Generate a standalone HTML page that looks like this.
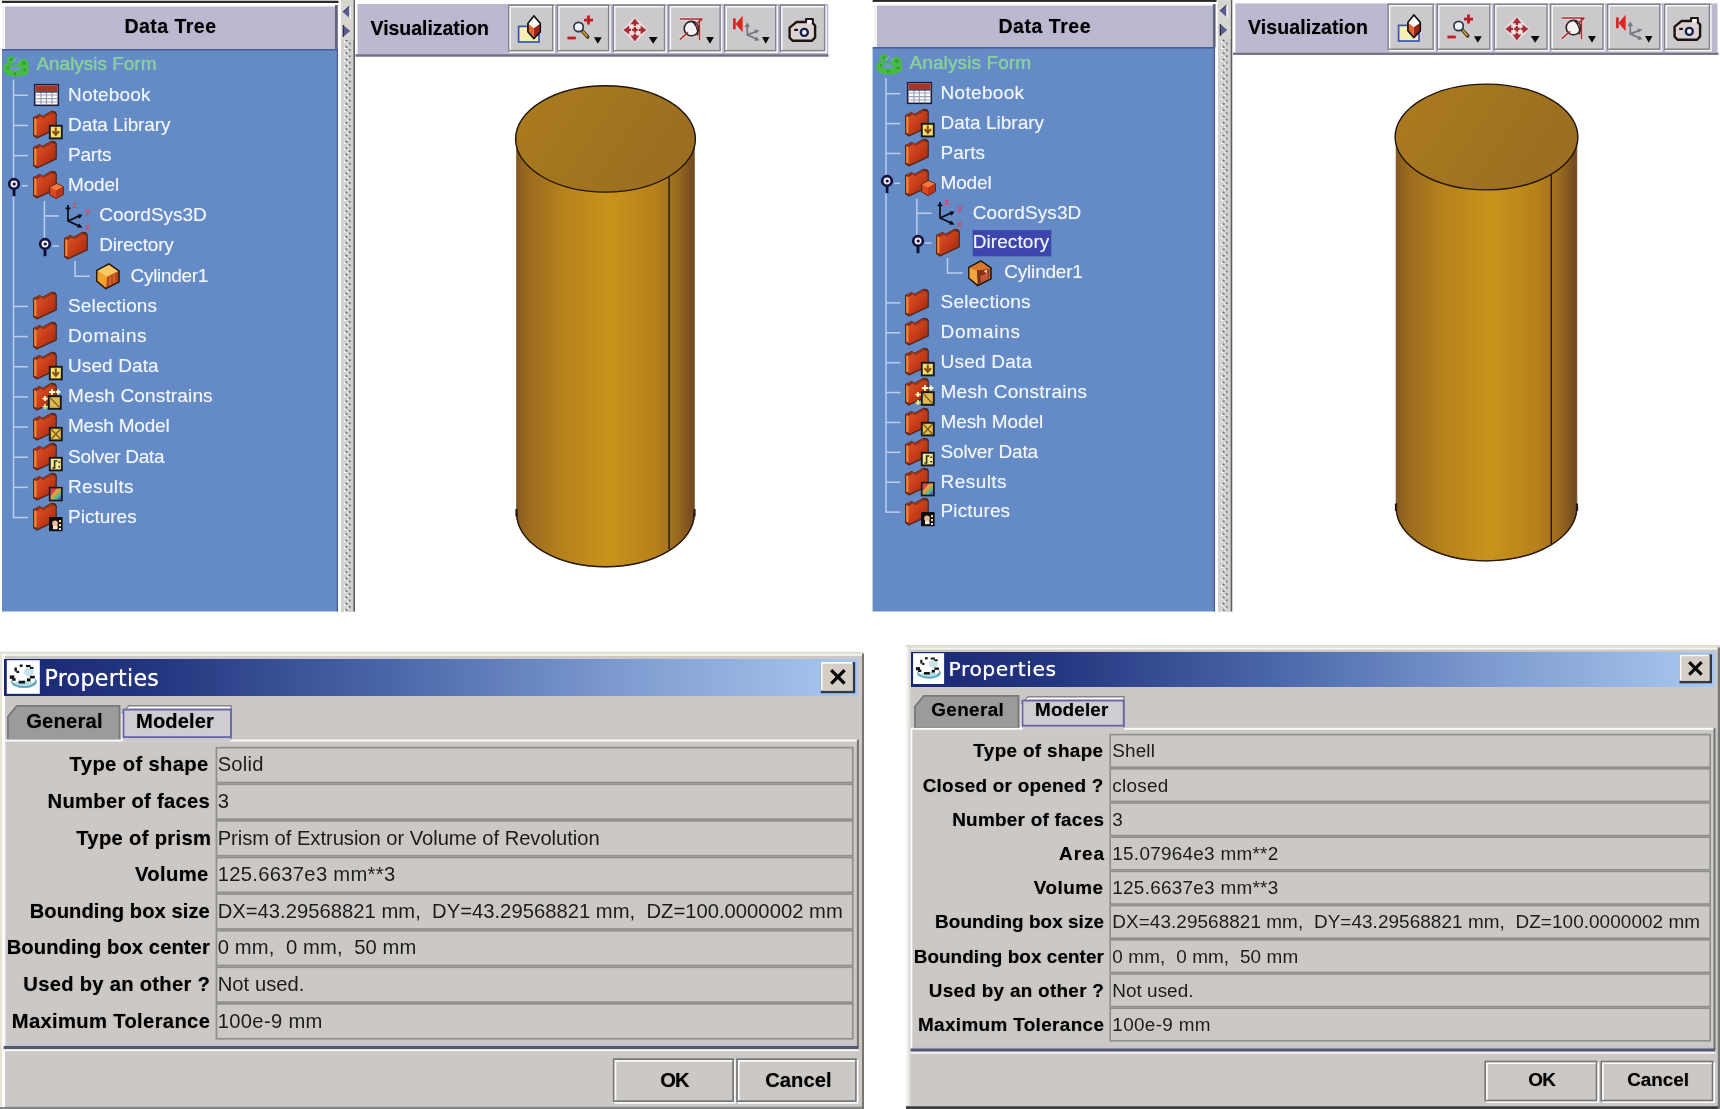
<!DOCTYPE html>
<html><head><meta charset="utf-8"><title>Properties</title>
<style>
html,body{margin:0;padding:0;background:#fff;}
body{width:1720px;height:1109px;position:relative;overflow:hidden;font-family:"Liberation Sans",sans-serif;}
.t{position:absolute;white-space:pre;line-height:1;color:#000;}
.tw{color:#f2f5fb;text-shadow:0 0 1px rgba(230,238,250,.55);}
.k{text-shadow:0 0 1px rgba(0,0,0,.45);}
svg{overflow:visible}
#stage{position:absolute;left:0;top:0;width:1720px;height:1109px;overflow:hidden;filter:blur(0.5px);}
</style></head><body><div id="stage">
<svg style="position:absolute;left:2px;top:0px" width="337" height="3"><g transform="translate(0.00 0.70)"><rect width="336.50" height="2.30" fill="#2a2a2a"/></g></svg>
<svg style="position:absolute;left:2px;top:50px" width="336" height="562"><g transform="translate(0.00 0.00)"><rect width="336.00" height="561.50" fill="#648bc6"/></g></svg>
<svg style="position:absolute;left:336px;top:50px" width="3" height="562"><g transform="translate(0.60 0.00)"><rect width="1.50" height="561.50" fill="#52638e"/></g></svg>
<svg style="position:absolute;left:5px;top:6px" width="330" height="43"><g transform="translate(0.00 0.50)"><rect width="330.00" height="42.50" fill="#bbb8d0"/></g></svg>
<svg style="position:absolute;left:335px;top:5px" width="3" height="45"><g transform="translate(0.00 0.00)"><rect width="2.80" height="44.50" fill="#63647f"/></g></svg>
<svg style="position:absolute;left:2px;top:6px" width="3" height="43"><g transform="translate(0.40 0.10)"><rect width="2.60" height="42.90" fill="#f4f4f8"/></g></svg>
<span class="t k" style="left:124.50px;top:16.89px;font-size:19.50px;letter-spacing:0.463px;font-weight:bold;">Data Tree</span>
<svg style="position:absolute;left:2px;top:49px" width="336" height="2"><g transform="translate(0.00 0.00)"><rect width="336.00" height="1.60" fill="#4a5f98"/></g></svg>
<div class="" style="position:absolute;left:341.00px;top:0.00px;width:12.60px;height:611.50px;background-color:#d2d1cd;background-image:radial-gradient(circle at 5.4px 1.6px,#74747e 0,#84848e 0.9px,rgba(255,255,255,0) 1.5px),radial-gradient(circle at 4.4px 2.4px,#fff 0,#fff 1px,rgba(255,255,255,0) 1.7px),radial-gradient(circle at 8.6px 4.8px,#74747e 0,#84848e 0.9px,rgba(255,255,255,0) 1.5px),radial-gradient(circle at 7.6px 5.6px,#fff 0,#fff 1px,rgba(255,255,255,0) 1.7px);background-size:14.00px 6.34px;background-position:0 39px"></div>
<svg style="position:absolute;left:353px;top:0px" width="2" height="612"><g transform="translate(0.40 0.00)"><rect width="1.60" height="611.50" fill="#5c5c5c"/></g></svg>
<svg style="position:absolute;left:341px;top:0px" width="13" height="40"><g transform="translate(0.00 0.00)"><rect width="12.40" height="40.00" fill="#d6d5d0"/></g></svg>
<svg style="position:absolute;left:341.00px;top:0.00px" width="14.00" height="38.00" viewBox="0 0 14.00 38"><polygon points="1.9,11.9 8.5,6 8.5,18" fill="#5c5a92"/><polygon points="2.1,24.9 2.1,37 9.3,31" fill="#5c5a92"/><path d="M9.1,6 V18.4" stroke="#fff" stroke-width="1.3"/><path d="M2.3,24.9 V37" stroke="#20203c" stroke-width="1.1"/><path d="M1.9,11.9 L8.5,6" stroke="#20203c" stroke-width="0.9"/></svg>
<svg style="position:absolute;left:357px;top:4px" width="472" height="51"><g transform="translate(0.50 0.00)"><rect width="470.80" height="50.20" fill="#bbb8d0"/></g></svg>
<span class="t k" style="left:370.50px;top:18.89px;font-size:19.50px;letter-spacing:-0.028px;font-weight:bold;">Visualization</span>
<svg style="position:absolute;left:355px;top:54px" width="474" height="3"><g transform="translate(0.50 0.20)"><rect width="473.00" height="2.50" fill="#6e6e84"/></g></svg>
<svg style="position:absolute;left:12px;top:79px" width="3" height="440"><g transform="translate(0.75 0.50)"><rect width="1.50" height="438.79" fill="#bccef0"/></g></svg>
<svg style="position:absolute;left:13px;top:94px" width="15" height="3"><g transform="translate(0.50 0.55)"><rect width="14.40" height="1.50" fill="#bccef0"/></g></svg>
<svg style="position:absolute;left:13px;top:124px" width="15" height="3"><g transform="translate(0.50 0.71)"><rect width="14.40" height="1.50" fill="#bccef0"/></g></svg>
<svg style="position:absolute;left:13px;top:154px" width="15" height="3"><g transform="translate(0.50 0.87)"><rect width="14.40" height="1.50" fill="#bccef0"/></g></svg>
<svg style="position:absolute;left:21px;top:185px" width="7" height="2"><g transform="translate(0.80 0.03)"><rect width="5.80" height="1.50" fill="#bccef0"/></g></svg>
<svg style="position:absolute;left:13px;top:305px" width="15" height="3"><g transform="translate(0.50 0.67)"><rect width="14.40" height="1.50" fill="#bccef0"/></g></svg>
<svg style="position:absolute;left:13px;top:335px" width="15" height="3"><g transform="translate(0.50 0.83)"><rect width="14.40" height="1.50" fill="#bccef0"/></g></svg>
<svg style="position:absolute;left:13px;top:365px" width="15" height="3"><g transform="translate(0.50 0.99)"><rect width="14.40" height="1.50" fill="#bccef0"/></g></svg>
<svg style="position:absolute;left:13px;top:396px" width="15" height="2"><g transform="translate(0.50 0.15)"><rect width="14.40" height="1.50" fill="#bccef0"/></g></svg>
<svg style="position:absolute;left:13px;top:426px" width="15" height="2"><g transform="translate(0.50 0.31)"><rect width="14.40" height="1.50" fill="#bccef0"/></g></svg>
<svg style="position:absolute;left:13px;top:456px" width="15" height="2"><g transform="translate(0.50 0.47)"><rect width="14.40" height="1.50" fill="#bccef0"/></g></svg>
<svg style="position:absolute;left:13px;top:486px" width="15" height="3"><g transform="translate(0.50 0.63)"><rect width="14.40" height="1.50" fill="#bccef0"/></g></svg>
<svg style="position:absolute;left:13px;top:516px" width="15" height="3"><g transform="translate(0.50 0.79)"><rect width="14.40" height="1.50" fill="#bccef0"/></g></svg>
<svg style="position:absolute;left:43px;top:200px" width="3" height="38"><g transform="translate(0.65 0.98)"><rect width="1.50" height="36.82" fill="#bccef0"/></g></svg>
<svg style="position:absolute;left:44px;top:215px" width="15" height="2"><g transform="translate(0.40 0.19)"><rect width="14.60" height="1.50" fill="#bccef0"/></g></svg>
<svg style="position:absolute;left:52px;top:245px" width="7" height="2"><g transform="translate(0.20 0.35)"><rect width="6.80" height="1.50" fill="#bccef0"/></g></svg>
<svg style="position:absolute;left:74px;top:260px" width="2" height="18"><g transform="translate(0.25 0.90)"><rect width="1.50" height="16.11" fill="#bccef0"/></g></svg>
<svg style="position:absolute;left:75px;top:275px" width="15" height="3"><g transform="translate(0.00 0.51)"><rect width="15.00" height="1.50" fill="#bccef0"/></g></svg>
<svg style="position:absolute;left:3.20px;top:54.54px" width="28.00" height="22.40" viewBox="0 0 28 22.4"><g fill="#46bc42"><ellipse cx="13.4" cy="15.6" rx="13" ry="6"/><circle cx="8" cy="5" r="3.8"/><ellipse cx="20.4" cy="9.4" rx="5.4" ry="5.6"/><ellipse cx="4.6" cy="12" rx="4.2" ry="3.2"/></g><ellipse cx="12" cy="13.4" rx="6" ry="2.2" fill="#6c98c8"/><path d="M10,7 L14,2.6 M15,8 L17,4" stroke="#78aad0" stroke-width="1.4"/><g fill="#34a034"><circle cx="8" cy="4.6" r="1.6"/><circle cx="21" cy="8" r="2"/><circle cx="5" cy="12.4" r="1.4"/><circle cx="22" cy="15" r="1.6"/><circle cx="12" cy="18.6" r="1.6"/></g></svg>
<span class="t tw" style="left:36.40px;top:54.46px;font-size:19.00px;letter-spacing:-0.021px;color:#84d48e;">Analysis Form</span>
<svg style="position:absolute;left:34.30px;top:83.70px" width="25.00" height="22.00" viewBox="0 0 25 22"><rect x="0.7" y="0.7" width="23.6" height="20.6" fill="#fff" stroke="#1c1c3c" stroke-width="1.6"/><rect x="1.5" y="1.5" width="22" height="5.6" fill="#a83424"/><path d="M1.5,11 H23.5 M1.5,14.6 H23.5 M1.5,18 H23.5 M7,8 V21 M12.4,8 V21 M18,8 V21" stroke="#9aa0b4" stroke-width="1.2" fill="none"/><rect x="1.5" y="7.1" width="22" height="1.6" fill="#40405a"/></svg>
<span class="t tw" style="left:68.00px;top:84.62px;font-size:19.00px;letter-spacing:0.181px;">Notebook</span>
<svg style="position:absolute;left:32.60px;top:111.16px" width="24.00" height="27.00" viewBox="0 0 24 27"><defs><linearGradient id="fg" x1="0" y1="0" x2="1" y2="1"><stop offset="0" stop-color="#de5426"/><stop offset="0.5" stop-color="#c63c18"/><stop offset="1" stop-color="#982810"/></linearGradient></defs><polygon points="0.5,6.6 6.6,3.4 9.4,5.4 18.6,0.3 22,0.9 23.3,2.7 23.3,17.9 4,27 0.6,24.8" fill="#7a2a14" stroke="#54281c" stroke-width="1.1" stroke-linejoin="round"/><polygon points="3.6,8 7.6,5.6 10,7.2 19,2.2 22.4,3.2 22.4,17.2 4.8,25.4 3.6,24.6" fill="url(#fg)"/><polygon points="1.2,7 3.6,8 3.6,24.6 1.2,23.8" fill="#f48838"/><path d="M1.6,6.8 L6.6,4.2 L9.4,6.2 L18.6,1.2" fill="none" stroke="#c23a1a" stroke-width="1"/></svg>
<svg style="position:absolute;left:48.60px;top:125.06px" width="13.60" height="14.20" viewBox="0 0 13.6 14.2"><rect x="0.8" y="0.8" width="12" height="12.6" fill="#f4e070" stroke="#18181a" stroke-width="1.9"/><path d="M6.8,2.6 V8.6 M3.6,6.2 L6.8,10 L10,6.2" stroke="#8a4a10" stroke-width="2" fill="none"/></svg>
<span class="t tw" style="left:68.00px;top:114.78px;font-size:19.00px;letter-spacing:-0.081px;">Data Library</span>
<svg style="position:absolute;left:32.60px;top:141.32px" width="24.00" height="27.00" viewBox="0 0 24 27"><defs><linearGradient id="fg" x1="0" y1="0" x2="1" y2="1"><stop offset="0" stop-color="#de5426"/><stop offset="0.5" stop-color="#c63c18"/><stop offset="1" stop-color="#982810"/></linearGradient></defs><polygon points="0.5,6.6 6.6,3.4 9.4,5.4 18.6,0.3 22,0.9 23.3,2.7 23.3,17.9 4,27 0.6,24.8" fill="#7a2a14" stroke="#54281c" stroke-width="1.1" stroke-linejoin="round"/><polygon points="3.6,8 7.6,5.6 10,7.2 19,2.2 22.4,3.2 22.4,17.2 4.8,25.4 3.6,24.6" fill="url(#fg)"/><polygon points="1.2,7 3.6,8 3.6,24.6 1.2,23.8" fill="#f48838"/><path d="M1.6,6.8 L6.6,4.2 L9.4,6.2 L18.6,1.2" fill="none" stroke="#c23a1a" stroke-width="1"/></svg>
<span class="t tw" style="left:68.00px;top:144.94px;font-size:19.00px;letter-spacing:-0.187px;">Parts</span>
<svg style="position:absolute;left:32.60px;top:171.48px" width="24.00" height="27.00" viewBox="0 0 24 27"><defs><linearGradient id="fg" x1="0" y1="0" x2="1" y2="1"><stop offset="0" stop-color="#de5426"/><stop offset="0.5" stop-color="#c63c18"/><stop offset="1" stop-color="#982810"/></linearGradient></defs><polygon points="0.5,6.6 6.6,3.4 9.4,5.4 18.6,0.3 22,0.9 23.3,2.7 23.3,17.9 4,27 0.6,24.8" fill="#7a2a14" stroke="#54281c" stroke-width="1.1" stroke-linejoin="round"/><polygon points="3.6,8 7.6,5.6 10,7.2 19,2.2 22.4,3.2 22.4,17.2 4.8,25.4 3.6,24.6" fill="url(#fg)"/><polygon points="1.2,7 3.6,8 3.6,24.6 1.2,23.8" fill="#f48838"/><path d="M1.6,6.8 L6.6,4.2 L9.4,6.2 L18.6,1.2" fill="none" stroke="#c23a1a" stroke-width="1"/></svg>
<svg style="position:absolute;left:48.80px;top:182.78px" width="15.00" height="16.20" viewBox="0 0 15 16.2"><polygon points="7.6,0.6 14.4,3.6 14.4,11.6 7,15.6 0.6,11.8 0.6,4.4" fill="#d8481e" stroke="#5a2010" stroke-width="1"/><polygon points="0.9,4.6 7.6,1 14,3.8 7.2,7.6" fill="#f07a40"/><polygon points="7.2,7.6 14,3.8 14,11.4 7.2,15" fill="#b83416"/></svg>
<span class="t tw" style="left:68.00px;top:175.10px;font-size:19.00px;letter-spacing:-0.162px;">Model</span>
<svg style="position:absolute;left:62.60px;top:200.74px" width="30.00" height="30.00" viewBox="0 0 30 30"><path d="M5,4 V20 L17,25.4 M5,20 L17,14.6 M2.6,7.4 H7.4" stroke="#0c0c14" stroke-width="1.7" fill="none"/><polygon points="19.6,26.8 14,26.6 16.2,22.4" fill="#0c0c14"/><polygon points="19.6,13.4 16.6,17.8 14.4,13.4" fill="#0c0c14"/><text x="9.6" y="6.6" font-family="Liberation Sans, sans-serif" font-size="8.5" font-weight="bold" fill="#d8485c">z</text><text x="22" y="13.4" font-family="Liberation Sans, sans-serif" font-size="9.5" font-weight="bold" fill="#d8485c">y</text><text x="22" y="28.6" font-family="Liberation Sans, sans-serif" font-size="9" font-weight="bold" fill="#d8485c">x</text></svg>
<span class="t tw" style="left:99.20px;top:205.26px;font-size:19.00px;letter-spacing:-0.012px;">CoordSys3D</span>
<svg style="position:absolute;left:63.80px;top:231.80px" width="24.00" height="27.00" viewBox="0 0 24 27"><defs><linearGradient id="fg" x1="0" y1="0" x2="1" y2="1"><stop offset="0" stop-color="#de5426"/><stop offset="0.5" stop-color="#c63c18"/><stop offset="1" stop-color="#982810"/></linearGradient></defs><polygon points="0.5,6.6 6.6,3.4 9.4,5.4 18.6,0.3 22,0.9 23.3,2.7 23.3,17.9 4,27 0.6,24.8" fill="#7a2a14" stroke="#54281c" stroke-width="1.1" stroke-linejoin="round"/><polygon points="3.6,8 7.6,5.6 10,7.2 19,2.2 22.4,3.2 22.4,17.2 4.8,25.4 3.6,24.6" fill="url(#fg)"/><polygon points="1.2,7 3.6,8 3.6,24.6 1.2,23.8" fill="#f48838"/><path d="M1.6,6.8 L6.6,4.2 L9.4,6.2 L18.6,1.2" fill="none" stroke="#c23a1a" stroke-width="1"/></svg>
<span class="t tw" style="left:99.20px;top:235.42px;font-size:19.00px;letter-spacing:-0.176px;">Directory</span>
<svg style="position:absolute;left:95.80px;top:263.26px" width="23.80" height="26.40" viewBox="0 0 25.2 26.4" preserveAspectRatio="none"><polygon points="13.6,0.9 24.3,8 24.3,18.8 10.4,25.6 0.9,18.2 0.9,7.6" fill="#f2a234" stroke="#241408" stroke-width="1.7" stroke-linejoin="round"/><polygon points="1.8,7.8 13.6,2 23.4,8.2 11.4,14" fill="#f9c862"/><polygon points="11.4,14 23.4,8.2 23.4,18.4 10.6,24.6" fill="#b8481e"/><polygon points="1.8,7.8 11.4,14 10.6,24.6 1.8,17.8" fill="#f2a030"/><path d="M15,13 V22 M19,11 V20" stroke="#d87030" stroke-width="1.6"/></svg>
<span class="t tw" style="left:130.60px;top:265.58px;font-size:19.00px;letter-spacing:-0.332px;">Cylinder1</span>
<svg style="position:absolute;left:32.60px;top:292.12px" width="24.00" height="27.00" viewBox="0 0 24 27"><defs><linearGradient id="fg" x1="0" y1="0" x2="1" y2="1"><stop offset="0" stop-color="#de5426"/><stop offset="0.5" stop-color="#c63c18"/><stop offset="1" stop-color="#982810"/></linearGradient></defs><polygon points="0.5,6.6 6.6,3.4 9.4,5.4 18.6,0.3 22,0.9 23.3,2.7 23.3,17.9 4,27 0.6,24.8" fill="#7a2a14" stroke="#54281c" stroke-width="1.1" stroke-linejoin="round"/><polygon points="3.6,8 7.6,5.6 10,7.2 19,2.2 22.4,3.2 22.4,17.2 4.8,25.4 3.6,24.6" fill="url(#fg)"/><polygon points="1.2,7 3.6,8 3.6,24.6 1.2,23.8" fill="#f48838"/><path d="M1.6,6.8 L6.6,4.2 L9.4,6.2 L18.6,1.2" fill="none" stroke="#c23a1a" stroke-width="1"/></svg>
<span class="t tw" style="left:68.00px;top:295.74px;font-size:19.00px;letter-spacing:0.160px;">Selections</span>
<svg style="position:absolute;left:32.60px;top:322.28px" width="24.00" height="27.00" viewBox="0 0 24 27"><defs><linearGradient id="fg" x1="0" y1="0" x2="1" y2="1"><stop offset="0" stop-color="#de5426"/><stop offset="0.5" stop-color="#c63c18"/><stop offset="1" stop-color="#982810"/></linearGradient></defs><polygon points="0.5,6.6 6.6,3.4 9.4,5.4 18.6,0.3 22,0.9 23.3,2.7 23.3,17.9 4,27 0.6,24.8" fill="#7a2a14" stroke="#54281c" stroke-width="1.1" stroke-linejoin="round"/><polygon points="3.6,8 7.6,5.6 10,7.2 19,2.2 22.4,3.2 22.4,17.2 4.8,25.4 3.6,24.6" fill="url(#fg)"/><polygon points="1.2,7 3.6,8 3.6,24.6 1.2,23.8" fill="#f48838"/><path d="M1.6,6.8 L6.6,4.2 L9.4,6.2 L18.6,1.2" fill="none" stroke="#c23a1a" stroke-width="1"/></svg>
<span class="t tw" style="left:68.00px;top:325.90px;font-size:19.00px;letter-spacing:0.605px;">Domains</span>
<svg style="position:absolute;left:32.60px;top:352.44px" width="24.00" height="27.00" viewBox="0 0 24 27"><defs><linearGradient id="fg" x1="0" y1="0" x2="1" y2="1"><stop offset="0" stop-color="#de5426"/><stop offset="0.5" stop-color="#c63c18"/><stop offset="1" stop-color="#982810"/></linearGradient></defs><polygon points="0.5,6.6 6.6,3.4 9.4,5.4 18.6,0.3 22,0.9 23.3,2.7 23.3,17.9 4,27 0.6,24.8" fill="#7a2a14" stroke="#54281c" stroke-width="1.1" stroke-linejoin="round"/><polygon points="3.6,8 7.6,5.6 10,7.2 19,2.2 22.4,3.2 22.4,17.2 4.8,25.4 3.6,24.6" fill="url(#fg)"/><polygon points="1.2,7 3.6,8 3.6,24.6 1.2,23.8" fill="#f48838"/><path d="M1.6,6.8 L6.6,4.2 L9.4,6.2 L18.6,1.2" fill="none" stroke="#c23a1a" stroke-width="1"/></svg>
<svg style="position:absolute;left:48.60px;top:366.34px" width="13.60" height="14.20" viewBox="0 0 13.6 14.2"><rect x="0.8" y="0.8" width="12" height="12.6" fill="#f4e070" stroke="#18181a" stroke-width="1.9"/><path d="M6.8,2.6 V8.6 M3.6,6.2 L6.8,10 L10,6.2" stroke="#8a4a10" stroke-width="2" fill="none"/></svg>
<span class="t tw" style="left:68.00px;top:356.06px;font-size:19.00px;letter-spacing:0.104px;">Used Data</span>
<svg style="position:absolute;left:32.60px;top:382.60px" width="24.00" height="27.00" viewBox="0 0 24 27"><defs><linearGradient id="fg" x1="0" y1="0" x2="1" y2="1"><stop offset="0" stop-color="#de5426"/><stop offset="0.5" stop-color="#c63c18"/><stop offset="1" stop-color="#982810"/></linearGradient></defs><polygon points="0.5,6.6 6.6,3.4 9.4,5.4 18.6,0.3 22,0.9 23.3,2.7 23.3,17.9 4,27 0.6,24.8" fill="#7a2a14" stroke="#54281c" stroke-width="1.1" stroke-linejoin="round"/><polygon points="3.6,8 7.6,5.6 10,7.2 19,2.2 22.4,3.2 22.4,17.2 4.8,25.4 3.6,24.6" fill="url(#fg)"/><polygon points="1.2,7 3.6,8 3.6,24.6 1.2,23.8" fill="#f48838"/><path d="M1.6,6.8 L6.6,4.2 L9.4,6.2 L18.6,1.2" fill="none" stroke="#c23a1a" stroke-width="1"/></svg>
<svg style="position:absolute;left:42.40px;top:388.90px" width="19.60" height="21.00" viewBox="0 0 19.6 21"><path d="M10,0 V6 M7,3 H13 M16,0.5 V5.5 M13.6,3 H18.4 M3,7 V12 M0.5,9.6 H6" stroke="#fff8c0" stroke-width="1.8" fill="none"/><path d="M3,15 V20 M0.5,17.6 H6" stroke="#d8f070" stroke-width="1.8" fill="none"/><rect x="6.8" y="7.2" width="12" height="12.6" fill="#e0b850" stroke="#18181a" stroke-width="1.9"/><path d="M8,8.4 L17.6,18.6" stroke="#7a5a10" stroke-width="1.3" fill="none"/></svg>
<span class="t tw" style="left:68.00px;top:386.22px;font-size:19.00px;letter-spacing:0.146px;">Mesh Constrains</span>
<svg style="position:absolute;left:32.60px;top:412.76px" width="24.00" height="27.00" viewBox="0 0 24 27"><defs><linearGradient id="fg" x1="0" y1="0" x2="1" y2="1"><stop offset="0" stop-color="#de5426"/><stop offset="0.5" stop-color="#c63c18"/><stop offset="1" stop-color="#982810"/></linearGradient></defs><polygon points="0.5,6.6 6.6,3.4 9.4,5.4 18.6,0.3 22,0.9 23.3,2.7 23.3,17.9 4,27 0.6,24.8" fill="#7a2a14" stroke="#54281c" stroke-width="1.1" stroke-linejoin="round"/><polygon points="3.6,8 7.6,5.6 10,7.2 19,2.2 22.4,3.2 22.4,17.2 4.8,25.4 3.6,24.6" fill="url(#fg)"/><polygon points="1.2,7 3.6,8 3.6,24.6 1.2,23.8" fill="#f48838"/><path d="M1.6,6.8 L6.6,4.2 L9.4,6.2 L18.6,1.2" fill="none" stroke="#c23a1a" stroke-width="1"/></svg>
<svg style="position:absolute;left:48.60px;top:426.66px" width="13.60" height="14.20" viewBox="0 0 13.6 14.2"><rect x="0.8" y="0.8" width="12" height="12.6" fill="#e8c050" stroke="#18181a" stroke-width="1.9"/><path d="M2,2 L11.6,12.2 M11.6,2 L2,12.2" stroke="#7a5a10" stroke-width="1.3" fill="none"/></svg>
<span class="t tw" style="left:68.00px;top:416.38px;font-size:19.00px;letter-spacing:-0.210px;">Mesh Model</span>
<svg style="position:absolute;left:32.60px;top:442.92px" width="24.00" height="27.00" viewBox="0 0 24 27"><defs><linearGradient id="fg" x1="0" y1="0" x2="1" y2="1"><stop offset="0" stop-color="#de5426"/><stop offset="0.5" stop-color="#c63c18"/><stop offset="1" stop-color="#982810"/></linearGradient></defs><polygon points="0.5,6.6 6.6,3.4 9.4,5.4 18.6,0.3 22,0.9 23.3,2.7 23.3,17.9 4,27 0.6,24.8" fill="#7a2a14" stroke="#54281c" stroke-width="1.1" stroke-linejoin="round"/><polygon points="3.6,8 7.6,5.6 10,7.2 19,2.2 22.4,3.2 22.4,17.2 4.8,25.4 3.6,24.6" fill="url(#fg)"/><polygon points="1.2,7 3.6,8 3.6,24.6 1.2,23.8" fill="#f48838"/><path d="M1.6,6.8 L6.6,4.2 L9.4,6.2 L18.6,1.2" fill="none" stroke="#c23a1a" stroke-width="1"/></svg>
<svg style="position:absolute;left:48.60px;top:456.82px" width="13.60" height="14.20" viewBox="0 0 13.6 14.2"><rect x="0.8" y="0.8" width="12" height="12.6" fill="#f4e890" stroke="#18181a" stroke-width="1.9"/><path d="M3.4,11 H5.6 V4 H8.4 M10.2,4.6 V6 M10.2,9 V10.6" stroke="#30301a" stroke-width="1.6" fill="none"/></svg>
<span class="t tw" style="left:68.00px;top:446.54px;font-size:19.00px;letter-spacing:-0.267px;">Solver Data</span>
<svg style="position:absolute;left:32.60px;top:473.08px" width="24.00" height="27.00" viewBox="0 0 24 27"><defs><linearGradient id="fg" x1="0" y1="0" x2="1" y2="1"><stop offset="0" stop-color="#de5426"/><stop offset="0.5" stop-color="#c63c18"/><stop offset="1" stop-color="#982810"/></linearGradient></defs><polygon points="0.5,6.6 6.6,3.4 9.4,5.4 18.6,0.3 22,0.9 23.3,2.7 23.3,17.9 4,27 0.6,24.8" fill="#7a2a14" stroke="#54281c" stroke-width="1.1" stroke-linejoin="round"/><polygon points="3.6,8 7.6,5.6 10,7.2 19,2.2 22.4,3.2 22.4,17.2 4.8,25.4 3.6,24.6" fill="url(#fg)"/><polygon points="1.2,7 3.6,8 3.6,24.6 1.2,23.8" fill="#f48838"/><path d="M1.6,6.8 L6.6,4.2 L9.4,6.2 L18.6,1.2" fill="none" stroke="#c23a1a" stroke-width="1"/></svg>
<svg style="position:absolute;left:48.60px;top:486.98px" width="13.60" height="14.20" viewBox="0 0 13.6 14.2"><rect x="0.8" y="0.8" width="12" height="12.6" fill="#4080d0" stroke="#18181a" stroke-width="1.9"/><polygon points="1.6,1.6 8,1.6 1.6,9" fill="#e04040"/><polygon points="8,1.6 12,1.6 12,4 3,12.6 1.6,12.6 1.6,9" fill="#e0a040"/><polygon points="12,4 12,8 7.6,12.6 3,12.6" fill="#60c080"/><polygon points="12,8 12,12.6 7.6,12.6" fill="#5070d0"/></svg>
<span class="t tw" style="left:68.00px;top:476.70px;font-size:19.00px;letter-spacing:0.374px;">Results</span>
<svg style="position:absolute;left:32.60px;top:503.24px" width="24.00" height="27.00" viewBox="0 0 24 27"><defs><linearGradient id="fg" x1="0" y1="0" x2="1" y2="1"><stop offset="0" stop-color="#de5426"/><stop offset="0.5" stop-color="#c63c18"/><stop offset="1" stop-color="#982810"/></linearGradient></defs><polygon points="0.5,6.6 6.6,3.4 9.4,5.4 18.6,0.3 22,0.9 23.3,2.7 23.3,17.9 4,27 0.6,24.8" fill="#7a2a14" stroke="#54281c" stroke-width="1.1" stroke-linejoin="round"/><polygon points="3.6,8 7.6,5.6 10,7.2 19,2.2 22.4,3.2 22.4,17.2 4.8,25.4 3.6,24.6" fill="url(#fg)"/><polygon points="1.2,7 3.6,8 3.6,24.6 1.2,23.8" fill="#f48838"/><path d="M1.6,6.8 L6.6,4.2 L9.4,6.2 L18.6,1.2" fill="none" stroke="#c23a1a" stroke-width="1"/></svg>
<svg style="position:absolute;left:48.60px;top:517.14px" width="13.60" height="14.20" viewBox="0 0 13.6 14.2"><rect x="0" y="0" width="13.6" height="14.2" fill="#0c0c10"/><circle cx="6" cy="6.4" r="2.8" fill="#f0b890"/><rect x="4" y="8.6" width="4.6" height="3.6" fill="#f8e8d8"/><rect x="10" y="3" width="2" height="2.2" fill="#f0e090"/><rect x="10" y="7" width="2" height="2.2" fill="#f0e090"/><rect x="10" y="11" width="2" height="2" fill="#e8e8e8"/></svg>
<span class="t tw" style="left:68.00px;top:506.86px;font-size:19.00px;">Pictures</span>
<svg style="position:absolute;left:7.10px;top:176.78px" width="14.00" height="20.00" viewBox="0 0 14 20"><path d="M7,7 V19.2" stroke="#0c0c34" stroke-width="2.9"/><circle cx="7" cy="7" r="4.8" fill="#f0ecf8" stroke="#12123e" stroke-width="2.7"/><circle cx="7.2" cy="7" r="1.6" fill="#12123e"/></svg>
<svg style="position:absolute;left:38.00px;top:237.00px" width="14.00" height="20.00" viewBox="0 0 14 20"><path d="M7,7 V19.2" stroke="#0c0c34" stroke-width="2.9"/><circle cx="7" cy="7" r="4.8" fill="#f0ecf8" stroke="#12123e" stroke-width="2.7"/><circle cx="7.2" cy="7" r="1.6" fill="#12123e"/></svg>
<svg style="position:absolute;left:505px;top:1px" width="51" height="53"><g transform="translate(3.00 3.40)"><rect x="0.75" y="0.75" width="44.00" height="45.50" fill="#cbc9cb" stroke="#85838a" stroke-width="1.50"/><path d="M2.25,45.50 V2.25 H44.00" fill="none" stroke="#f6f6f8" stroke-width="1.50"/><path d="M1.50,47.75 H46.25 V1.50" fill="none" stroke="#f6f6f8" stroke-width="1.50"/></g></svg>
<svg style="position:absolute;left:507.25px;top:5.70px" width="46.00" height="46.00" viewBox="0 0 46 46"><rect x="11.6" y="20.4" width="20.4" height="15.6" fill="#f6f0b4" stroke="#3456b8" stroke-width="1.7"/><polygon points="26.9,10 33.3,17.4 33.3,25.8 26.9,32.4 21,25.8 21,17.4" fill="#fff" stroke="#141414" stroke-width="1.5" stroke-linejoin="round"/><polygon points="26.9,22 33.3,17.4 33.3,25.8 26.9,32.4" fill="#9c2414"/><polygon points="21,17.4 26.9,22 26.9,32.4 21,25.8" fill="#e26434"/><polygon points="21,17.4 26.9,10.6 33.3,17.4 26.9,22" fill="#fdfdfd"/><polygon points="26.9,10 33.3,17.4 33.3,25.8 26.9,32.4 21,25.8 21,17.4" fill="none" stroke="#141414" stroke-width="1.5" stroke-linejoin="round"/></svg>
<svg style="position:absolute;left:554px;top:1px" width="58" height="53"><g transform="translate(2.70 3.40)"><rect x="0.75" y="0.75" width="51.20" height="45.50" fill="#cbc9cb" stroke="#85838a" stroke-width="1.50"/><path d="M2.25,45.50 V2.25 H51.20" fill="none" stroke="#f6f6f8" stroke-width="1.50"/><path d="M1.50,47.75 H53.45 V1.50" fill="none" stroke="#f6f6f8" stroke-width="1.50"/></g></svg>
<svg style="position:absolute;left:556.55px;top:5.70px" width="46.00" height="46.00" viewBox="0 0 46 46"><path d="M24.8,24.4 L30.6,30.8" stroke="#3a3010" stroke-width="3.6" stroke-linecap="round"/><path d="M25.6,25.2 L30.4,30.6" stroke="#c8a040" stroke-width="1.8"/><circle cx="21.6" cy="21" r="4.7" fill="#eef4fc" stroke="#2c3448" stroke-width="1.7"/><path d="M27,14.1 H36 M31.5,9.6 V18.6" stroke="#c01c24" stroke-width="2.8"/><path d="M10.4,32 H18.8" stroke="#c01c24" stroke-width="2.8"/><polygon points="36.9,31.3 44.8,31.3 40.8,37.8" fill="#0a0a0a"/></svg>
<svg style="position:absolute;left:610px;top:1px" width="58" height="53"><g transform="translate(2.60 3.40)"><rect x="0.75" y="0.75" width="51.20" height="45.50" fill="#cbc9cb" stroke="#85838a" stroke-width="1.50"/><path d="M2.25,45.50 V2.25 H51.20" fill="none" stroke="#f6f6f8" stroke-width="1.50"/><path d="M1.50,47.75 H53.45 V1.50" fill="none" stroke="#f6f6f8" stroke-width="1.50"/></g></svg>
<svg style="position:absolute;left:612.45px;top:5.70px" width="46.00" height="46.00" viewBox="0 0 46 46"><polygon points="22.9,11 35.8,23.9 22.9,36.8 10,23.9" fill="#f4e4e4" opacity="0.8"/><path d="M22.9,15 V33 M14,23.9 H32" stroke="#a82c34" stroke-width="2.4"/><polygon points="22.9,12.4 27.4,18.2 18.4,18.2" fill="#a82c34"/><polygon points="22.9,35.4 27.4,29.6 18.4,29.6" fill="#a82c34"/><polygon points="11.4,23.9 17.2,19.4 17.2,28.4" fill="#a82c34"/><polygon points="34.4,23.9 28.6,19.4 28.6,28.4" fill="#a82c34"/><path d="M19.6,20.6 H26.2 M19.6,27.2 H26.2 M19.6,20.6 V27.2 M26.2,20.6 V27.2" stroke="#f8ecec" stroke-width="1" fill="none"/><polygon points="36.8,30.9 45.6,30.9 41.2,37.8" fill="#0a0a0a"/></svg>
<svg style="position:absolute;left:665px;top:1px" width="59" height="53"><g transform="translate(3.10 3.40)"><rect x="0.75" y="0.75" width="51.30" height="45.50" fill="#cbc9cb" stroke="#85838a" stroke-width="1.50"/><path d="M2.25,45.50 V2.25 H51.30" fill="none" stroke="#f6f6f8" stroke-width="1.50"/><path d="M1.50,47.75 H53.55 V1.50" fill="none" stroke="#f6f6f8" stroke-width="1.50"/></g></svg>
<svg style="position:absolute;left:668.00px;top:5.70px" width="46.00" height="46.00" viewBox="0 0 46 46"><path d="M11.8,13.1 H34.5 M31.5,13.1 V34 M11.8,33.6 L22,24.6" stroke="#f6d8d8" stroke-width="3.4" fill="none"/><circle cx="23.4" cy="22.6" r="7.2" fill="#f6f2f2" stroke="#2a2424" stroke-width="1.6"/><path d="M11.8,13.1 H34.5 M31.5,13.1 V34 M11.8,33.6 L20,26.4 M34,13.4 L27,19" stroke="#a83030" stroke-width="1.5" fill="none"/><path d="M24.6,15.8 Q31,21.6 29.4,29.4" stroke="#2a2424" stroke-width="1.5" fill="none"/><polygon points="38.0,30.9 45.9,30.9 42.0,37.8" fill="#0a0a0a"/></svg>
<svg style="position:absolute;left:721px;top:1px" width="58" height="53"><g transform="translate(3.00 3.40)"><rect x="0.75" y="0.75" width="51.00" height="45.50" fill="#cbc9cb" stroke="#85838a" stroke-width="1.50"/><path d="M2.25,45.50 V2.25 H51.00" fill="none" stroke="#f6f6f8" stroke-width="1.50"/><path d="M1.50,47.75 H53.25 V1.50" fill="none" stroke="#f6f6f8" stroke-width="1.50"/></g></svg>
<svg style="position:absolute;left:723.75px;top:5.70px" width="46.00" height="46.00" viewBox="0 0 46 46"><path d="M10.4,12.4 V23.2" stroke="#d42024" stroke-width="2.6"/><polygon points="11.6,18 18.6,9.8 18.6,26.2" fill="#e0241c"/><path d="M23.3,19 V28.9 L33,33.2 M23.3,28.9 L33,25.2" stroke="#74787c" stroke-width="1.7" fill="none"/><polygon points="23.3,16.6 20.6,21 26,21" fill="#74787c"/><polygon points="35.4,34.2 30.6,35 32,30.6" fill="#74787c"/><polygon points="35.4,24.4 31.6,27.8 30.4,23.4" fill="#74787c"/><polygon points="38.0,30.9 45.5,30.9 41.8,37.8" fill="#0a0a0a"/></svg>
<svg style="position:absolute;left:777px;top:1px" width="51" height="53"><g transform="translate(2.60 3.40)"><rect x="0.75" y="0.75" width="44.30" height="45.50" fill="#cbc9cb" stroke="#85838a" stroke-width="1.50"/><path d="M2.25,45.50 V2.25 H44.30" fill="none" stroke="#f6f6f8" stroke-width="1.50"/><path d="M1.50,47.75 H46.55 V1.50" fill="none" stroke="#f6f6f8" stroke-width="1.50"/></g></svg>
<svg style="position:absolute;left:779.00px;top:5.70px" width="46.00" height="46.00" viewBox="0 0 46 46"><path d="M13.4,19.4 L17.6,16 H27.2 V13.1 H33.7 V17.2 L36.1,19.6 V31.4 L33,34.8 H13.6 L10.6,31.6 V21.6 Z" fill="#dcd2d2" stroke="#1c1410" stroke-width="2.4" stroke-linejoin="round"/><rect x="28.2" y="14" width="4.6" height="3.4" fill="#fbfbfb"/><circle cx="25.3" cy="26.4" r="3.5" fill="#fbfbff" stroke="#16204c" stroke-width="2.4"/><rect x="15.2" y="22.8" width="3.8" height="2.2" fill="#181818"/></svg>
<svg style="position:absolute;left:0;top:0" width="1720" height="620" viewBox="0 0 1720 620"><defs><linearGradient id="ba" x1="0" y1="0" x2="1" y2="0"><stop offset="0" stop-color="#86591f"/><stop offset="0.05" stop-color="#98681f"/><stop offset="0.26" stop-color="#b6821c"/><stop offset="0.52" stop-color="#c9931b"/><stop offset="0.78" stop-color="#b7811c"/><stop offset="0.9" stop-color="#9a6b1f"/><stop offset="1" stop-color="#724820"/></linearGradient><linearGradient id="ta" x1="0" y1="0" x2="1" y2="0.4"><stop offset="0" stop-color="#ab7c1f"/><stop offset="0.5" stop-color="#a3751f"/><stop offset="1" stop-color="#9b6e21"/></linearGradient></defs><path d="M516.7,138.9 V513.6 A88.8,53.2 0 0 0 694.3,513.6 V138.9 Z" fill="url(#ba)" stroke="#6a4418" stroke-width="0.8"/><path d="M516.7,513.6 A88.8,53.2 0 0 0 694.3,513.6" fill="none" stroke="#2a1808" stroke-width="1.4"/><path d="M516.5,509.1 V516.6 M694.5,509.1 V516.6" stroke="#2a1808" stroke-width="2.2"/><path d="M669.1,176.0 V549.5" stroke="#1a1008" stroke-width="1.3"/><ellipse cx="605.5" cy="138.9" rx="89.9" ry="53.2" fill="url(#ta)" stroke="#20140a" stroke-width="1.4"/></svg>
<svg style="position:absolute;left:872px;top:0px" width="345" height="2"><g transform="translate(0.60 0.00)"><rect width="344.00" height="1.90" fill="#2a2a2a"/></g></svg>
<svg style="position:absolute;left:872px;top:48px" width="343" height="564"><g transform="translate(0.60 0.00)"><rect width="342.40" height="563.50" fill="#648bc6"/></g></svg>
<svg style="position:absolute;left:1213px;top:48px" width="3" height="564"><g transform="translate(0.60 0.00)"><rect width="1.50" height="563.50" fill="#52638e"/></g></svg>
<svg style="position:absolute;left:876px;top:5px" width="337" height="42"><g transform="translate(0.80 0.60)"><rect width="336.00" height="41.40" fill="#bbb8d0"/></g></svg>
<svg style="position:absolute;left:1212px;top:4px" width="4" height="44"><g transform="translate(0.80 0.10)"><rect width="2.80" height="43.40" fill="#63647f"/></g></svg>
<svg style="position:absolute;left:874px;top:5px" width="3" height="42"><g transform="translate(0.20 0.20)"><rect width="2.60" height="41.80" fill="#f4f4f8"/></g></svg>
<span class="t k" style="left:998.50px;top:16.89px;font-size:19.50px;letter-spacing:0.525px;font-weight:bold;">Data Tree</span>
<svg style="position:absolute;left:872px;top:47px" width="343" height="2"><g transform="translate(0.60 0.00)"><rect width="342.40" height="1.60" fill="#4a5f98"/></g></svg>
<div class="" style="position:absolute;left:1217.70px;top:0.00px;width:13.20px;height:611.50px;background-color:#d2d1cd;background-image:radial-gradient(circle at 5.4px 1.6px,#74747e 0,#84848e 0.9px,rgba(255,255,255,0) 1.5px),radial-gradient(circle at 4.4px 2.4px,#fff 0,#fff 1px,rgba(255,255,255,0) 1.7px),radial-gradient(circle at 8.6px 4.8px,#74747e 0,#84848e 0.9px,rgba(255,255,255,0) 1.5px),radial-gradient(circle at 7.6px 5.6px,#fff 0,#fff 1px,rgba(255,255,255,0) 1.7px);background-size:14.60px 6.34px;background-position:0 39px"></div>
<svg style="position:absolute;left:1230px;top:0px" width="3" height="612"><g transform="translate(0.70 0.00)"><rect width="1.60" height="611.50" fill="#5c5c5c"/></g></svg>
<svg style="position:absolute;left:1217px;top:0px" width="14" height="39"><g transform="translate(0.70 0.00)"><rect width="13.00" height="38.90" fill="#d6d5d0"/></g></svg>
<svg style="position:absolute;left:1217.70px;top:-1.10px" width="14.60" height="38.00" viewBox="0 0 14.60 38"><polygon points="1.9,11.9 8.5,6 8.5,18" fill="#5c5a92"/><polygon points="2.1,24.9 2.1,37 9.3,31" fill="#5c5a92"/><path d="M9.1,6 V18.4" stroke="#fff" stroke-width="1.3"/><path d="M2.3,24.9 V37" stroke="#20203c" stroke-width="1.1"/><path d="M1.9,11.9 L8.5,6" stroke="#20203c" stroke-width="0.9"/></svg>
<svg style="position:absolute;left:1235px;top:3px" width="483" height="50"><g transform="translate(0.40 0.40)"><rect width="482.10" height="49.20" fill="#bbb8d0"/></g></svg>
<span class="t k" style="left:1248.00px;top:17.89px;font-size:19.50px;letter-spacing:0.097px;font-weight:bold;">Visualization</span>
<svg style="position:absolute;left:1233px;top:52px" width="486" height="3"><g transform="translate(0.00 0.60)"><rect width="485.50" height="2.30" fill="#6e6e84"/></g></svg>
<svg style="position:absolute;left:885px;top:77px" width="2" height="436"><g transform="translate(0.25 0.90)"><rect width="1.50" height="434.95" fill="#bccef0"/></g></svg>
<svg style="position:absolute;left:886px;top:92px" width="15" height="3"><g transform="translate(0.00 0.95)"><rect width="14.40" height="1.50" fill="#bccef0"/></g></svg>
<svg style="position:absolute;left:886px;top:122px" width="15" height="3"><g transform="translate(0.00 0.84)"><rect width="14.40" height="1.50" fill="#bccef0"/></g></svg>
<svg style="position:absolute;left:886px;top:152px" width="15" height="3"><g transform="translate(0.00 0.72)"><rect width="14.40" height="1.50" fill="#bccef0"/></g></svg>
<svg style="position:absolute;left:894px;top:182px" width="7" height="3"><g transform="translate(0.30 0.61)"><rect width="5.80" height="1.50" fill="#bccef0"/></g></svg>
<svg style="position:absolute;left:886px;top:302px" width="15" height="2"><g transform="translate(0.00 0.15)"><rect width="14.40" height="1.50" fill="#bccef0"/></g></svg>
<svg style="position:absolute;left:886px;top:332px" width="15" height="2"><g transform="translate(0.00 0.04)"><rect width="14.40" height="1.50" fill="#bccef0"/></g></svg>
<svg style="position:absolute;left:886px;top:361px" width="15" height="3"><g transform="translate(0.00 0.92)"><rect width="14.40" height="1.50" fill="#bccef0"/></g></svg>
<svg style="position:absolute;left:886px;top:391px" width="15" height="3"><g transform="translate(0.00 0.81)"><rect width="14.40" height="1.50" fill="#bccef0"/></g></svg>
<svg style="position:absolute;left:886px;top:421px" width="15" height="3"><g transform="translate(0.00 0.70)"><rect width="14.40" height="1.50" fill="#bccef0"/></g></svg>
<svg style="position:absolute;left:886px;top:451px" width="15" height="3"><g transform="translate(0.00 0.58)"><rect width="14.40" height="1.50" fill="#bccef0"/></g></svg>
<svg style="position:absolute;left:886px;top:481px" width="15" height="2"><g transform="translate(0.00 0.47)"><rect width="14.40" height="1.50" fill="#bccef0"/></g></svg>
<svg style="position:absolute;left:886px;top:511px" width="15" height="2"><g transform="translate(0.00 0.35)"><rect width="14.40" height="1.50" fill="#bccef0"/></g></svg>
<svg style="position:absolute;left:916px;top:198px" width="2" height="37"><g transform="translate(0.15 0.56)"><rect width="1.50" height="36.27" fill="#bccef0"/></g></svg>
<svg style="position:absolute;left:916px;top:212px" width="16" height="2"><g transform="translate(0.90 0.49)"><rect width="14.60" height="1.50" fill="#bccef0"/></g></svg>
<svg style="position:absolute;left:924px;top:242px" width="8" height="2"><g transform="translate(0.70 0.38)"><rect width="6.80" height="1.50" fill="#bccef0"/></g></svg>
<svg style="position:absolute;left:946px;top:257px" width="3" height="17"><g transform="translate(0.75 0.93)"><rect width="1.50" height="15.84" fill="#bccef0"/></g></svg>
<svg style="position:absolute;left:947px;top:272px" width="16" height="2"><g transform="translate(0.50 0.27)"><rect width="15.00" height="1.50" fill="#bccef0"/></g></svg>
<svg style="position:absolute;left:875.70px;top:53.21px" width="28.00" height="22.40" viewBox="0 0 28 22.4"><g fill="#46bc42"><ellipse cx="13.4" cy="15.6" rx="13" ry="6"/><circle cx="8" cy="5" r="3.8"/><ellipse cx="20.4" cy="9.4" rx="5.4" ry="5.6"/><ellipse cx="4.6" cy="12" rx="4.2" ry="3.2"/></g><ellipse cx="12" cy="13.4" rx="6" ry="2.2" fill="#6c98c8"/><path d="M10,7 L14,2.6 M15,8 L17,4" stroke="#78aad0" stroke-width="1.4"/><g fill="#34a034"><circle cx="8" cy="4.6" r="1.6"/><circle cx="21" cy="8" r="2"/><circle cx="5" cy="12.4" r="1.4"/><circle cx="22" cy="15" r="1.6"/><circle cx="12" cy="18.6" r="1.6"/></g></svg>
<span class="t tw" style="left:909.50px;top:53.13px;font-size:19.00px;letter-spacing:0.104px;color:#84d48e;">Analysis Form</span>
<svg style="position:absolute;left:906.80px;top:82.10px" width="25.00" height="22.00" viewBox="0 0 25 22"><rect x="0.7" y="0.7" width="23.6" height="20.6" fill="#fff" stroke="#1c1c3c" stroke-width="1.6"/><rect x="1.5" y="1.5" width="22" height="5.6" fill="#a83424"/><path d="M1.5,11 H23.5 M1.5,14.6 H23.5 M1.5,18 H23.5 M7,8 V21 M12.4,8 V21 M18,8 V21" stroke="#9aa0b4" stroke-width="1.2" fill="none"/><rect x="1.5" y="7.1" width="22" height="1.6" fill="#40405a"/></svg>
<span class="t tw" style="left:940.50px;top:83.02px;font-size:19.00px;letter-spacing:0.324px;">Notebook</span>
<svg style="position:absolute;left:905.10px;top:109.29px" width="24.00" height="27.00" viewBox="0 0 24 27"><defs><linearGradient id="fg" x1="0" y1="0" x2="1" y2="1"><stop offset="0" stop-color="#de5426"/><stop offset="0.5" stop-color="#c63c18"/><stop offset="1" stop-color="#982810"/></linearGradient></defs><polygon points="0.5,6.6 6.6,3.4 9.4,5.4 18.6,0.3 22,0.9 23.3,2.7 23.3,17.9 4,27 0.6,24.8" fill="#7a2a14" stroke="#54281c" stroke-width="1.1" stroke-linejoin="round"/><polygon points="3.6,8 7.6,5.6 10,7.2 19,2.2 22.4,3.2 22.4,17.2 4.8,25.4 3.6,24.6" fill="url(#fg)"/><polygon points="1.2,7 3.6,8 3.6,24.6 1.2,23.8" fill="#f48838"/><path d="M1.6,6.8 L6.6,4.2 L9.4,6.2 L18.6,1.2" fill="none" stroke="#c23a1a" stroke-width="1"/></svg>
<svg style="position:absolute;left:921.10px;top:123.19px" width="13.60" height="14.20" viewBox="0 0 13.6 14.2"><rect x="0.8" y="0.8" width="12" height="12.6" fill="#f4e070" stroke="#18181a" stroke-width="1.9"/><path d="M6.8,2.6 V8.6 M3.6,6.2 L6.8,10 L10,6.2" stroke="#8a4a10" stroke-width="2" fill="none"/></svg>
<span class="t tw" style="left:940.50px;top:112.90px;font-size:19.00px;letter-spacing:0.010px;">Data Library</span>
<svg style="position:absolute;left:905.10px;top:139.17px" width="24.00" height="27.00" viewBox="0 0 24 27"><defs><linearGradient id="fg" x1="0" y1="0" x2="1" y2="1"><stop offset="0" stop-color="#de5426"/><stop offset="0.5" stop-color="#c63c18"/><stop offset="1" stop-color="#982810"/></linearGradient></defs><polygon points="0.5,6.6 6.6,3.4 9.4,5.4 18.6,0.3 22,0.9 23.3,2.7 23.3,17.9 4,27 0.6,24.8" fill="#7a2a14" stroke="#54281c" stroke-width="1.1" stroke-linejoin="round"/><polygon points="3.6,8 7.6,5.6 10,7.2 19,2.2 22.4,3.2 22.4,17.2 4.8,25.4 3.6,24.6" fill="url(#fg)"/><polygon points="1.2,7 3.6,8 3.6,24.6 1.2,23.8" fill="#f48838"/><path d="M1.6,6.8 L6.6,4.2 L9.4,6.2 L18.6,1.2" fill="none" stroke="#c23a1a" stroke-width="1"/></svg>
<span class="t tw" style="left:940.50px;top:142.79px;font-size:19.00px;letter-spacing:0.063px;">Parts</span>
<svg style="position:absolute;left:905.10px;top:169.06px" width="24.00" height="27.00" viewBox="0 0 24 27"><defs><linearGradient id="fg" x1="0" y1="0" x2="1" y2="1"><stop offset="0" stop-color="#de5426"/><stop offset="0.5" stop-color="#c63c18"/><stop offset="1" stop-color="#982810"/></linearGradient></defs><polygon points="0.5,6.6 6.6,3.4 9.4,5.4 18.6,0.3 22,0.9 23.3,2.7 23.3,17.9 4,27 0.6,24.8" fill="#7a2a14" stroke="#54281c" stroke-width="1.1" stroke-linejoin="round"/><polygon points="3.6,8 7.6,5.6 10,7.2 19,2.2 22.4,3.2 22.4,17.2 4.8,25.4 3.6,24.6" fill="url(#fg)"/><polygon points="1.2,7 3.6,8 3.6,24.6 1.2,23.8" fill="#f48838"/><path d="M1.6,6.8 L6.6,4.2 L9.4,6.2 L18.6,1.2" fill="none" stroke="#c23a1a" stroke-width="1"/></svg>
<svg style="position:absolute;left:921.30px;top:180.36px" width="15.00" height="16.20" viewBox="0 0 15 16.2"><polygon points="7.6,0.6 14.4,3.6 14.4,11.6 7,15.6 0.6,11.8 0.6,4.4" fill="#d8481e" stroke="#5a2010" stroke-width="1"/><polygon points="0.9,4.6 7.6,1 14,3.8 7.2,7.6" fill="#f07a40"/><polygon points="7.2,7.6 14,3.8 14,11.4 7.2,15" fill="#b83416"/></svg>
<span class="t tw" style="left:940.50px;top:172.67px;font-size:19.00px;letter-spacing:-0.162px;">Model</span>
<svg style="position:absolute;left:935.10px;top:198.04px" width="30.00" height="30.00" viewBox="0 0 30 30"><path d="M5,4 V20 L17,25.4 M5,20 L17,14.6 M2.6,7.4 H7.4" stroke="#0c0c14" stroke-width="1.7" fill="none"/><polygon points="19.6,26.8 14,26.6 16.2,22.4" fill="#0c0c14"/><polygon points="19.6,13.4 16.6,17.8 14.4,13.4" fill="#0c0c14"/><text x="9.6" y="6.6" font-family="Liberation Sans, sans-serif" font-size="8.5" font-weight="bold" fill="#d8485c">z</text><text x="22" y="13.4" font-family="Liberation Sans, sans-serif" font-size="9.5" font-weight="bold" fill="#d8485c">y</text><text x="22" y="28.6" font-family="Liberation Sans, sans-serif" font-size="9" font-weight="bold" fill="#d8485c">x</text></svg>
<span class="t tw" style="left:972.70px;top:202.56px;font-size:19.00px;letter-spacing:0.099px;">CoordSys3D</span>
<svg style="position:absolute;left:936.30px;top:228.83px" width="24.00" height="27.00" viewBox="0 0 24 27"><defs><linearGradient id="fg" x1="0" y1="0" x2="1" y2="1"><stop offset="0" stop-color="#de5426"/><stop offset="0.5" stop-color="#c63c18"/><stop offset="1" stop-color="#982810"/></linearGradient></defs><polygon points="0.5,6.6 6.6,3.4 9.4,5.4 18.6,0.3 22,0.9 23.3,2.7 23.3,17.9 4,27 0.6,24.8" fill="#7a2a14" stroke="#54281c" stroke-width="1.1" stroke-linejoin="round"/><polygon points="3.6,8 7.6,5.6 10,7.2 19,2.2 22.4,3.2 22.4,17.2 4.8,25.4 3.6,24.6" fill="url(#fg)"/><polygon points="1.2,7 3.6,8 3.6,24.6 1.2,23.8" fill="#f48838"/><path d="M1.6,6.8 L6.6,4.2 L9.4,6.2 L18.6,1.2" fill="none" stroke="#c23a1a" stroke-width="1"/></svg>
<svg style="position:absolute;left:972px;top:230px" width="80" height="27"><g transform="translate(0.70 0.13)"><rect width="78.60" height="26.20" fill="#3d45ad"/></g></svg>
<span class="t tw" style="left:972.70px;top:232.45px;font-size:19.00px;letter-spacing:0.074px;">Directory</span>
<svg style="position:absolute;left:968.30px;top:260.02px" width="23.80" height="26.40" viewBox="0 0 25.2 26.4" preserveAspectRatio="none"><polygon points="13.6,0.9 24.3,8 24.3,18.8 10.4,25.6 0.9,18.2 0.9,7.6" fill="#f2a438" stroke="#241408" stroke-width="1.7" stroke-linejoin="round"/><polygon points="1.8,7.8 13.6,2 23.4,8.2 11.4,14" fill="#d8782c"/><polygon points="9.6,10.4 22.8,9 22.8,18 10.8,24" fill="#8a3018"/><polygon points="13,16 21.4,12.6 21.4,18.4 13.6,22.2" fill="#c4543a"/><polygon points="16.6,10.8 20.6,10 19.6,13.4" fill="#f0d8c8"/><path d="M9.6,10.4 L10.6,24.4" stroke="#241408" stroke-width="1.2"/><polygon points="1.8,8.2 9.6,10.6 10.4,24 1.8,17.8" fill="#f4a63a"/></svg>
<span class="t tw" style="left:1004.30px;top:262.33px;font-size:19.00px;letter-spacing:-0.207px;">Cylinder1</span>
<svg style="position:absolute;left:905.10px;top:288.60px" width="24.00" height="27.00" viewBox="0 0 24 27"><defs><linearGradient id="fg" x1="0" y1="0" x2="1" y2="1"><stop offset="0" stop-color="#de5426"/><stop offset="0.5" stop-color="#c63c18"/><stop offset="1" stop-color="#982810"/></linearGradient></defs><polygon points="0.5,6.6 6.6,3.4 9.4,5.4 18.6,0.3 22,0.9 23.3,2.7 23.3,17.9 4,27 0.6,24.8" fill="#7a2a14" stroke="#54281c" stroke-width="1.1" stroke-linejoin="round"/><polygon points="3.6,8 7.6,5.6 10,7.2 19,2.2 22.4,3.2 22.4,17.2 4.8,25.4 3.6,24.6" fill="url(#fg)"/><polygon points="1.2,7 3.6,8 3.6,24.6 1.2,23.8" fill="#f48838"/><path d="M1.6,6.8 L6.6,4.2 L9.4,6.2 L18.6,1.2" fill="none" stroke="#c23a1a" stroke-width="1"/></svg>
<span class="t tw" style="left:940.50px;top:292.22px;font-size:19.00px;letter-spacing:0.271px;">Selections</span>
<svg style="position:absolute;left:905.10px;top:318.49px" width="24.00" height="27.00" viewBox="0 0 24 27"><defs><linearGradient id="fg" x1="0" y1="0" x2="1" y2="1"><stop offset="0" stop-color="#de5426"/><stop offset="0.5" stop-color="#c63c18"/><stop offset="1" stop-color="#982810"/></linearGradient></defs><polygon points="0.5,6.6 6.6,3.4 9.4,5.4 18.6,0.3 22,0.9 23.3,2.7 23.3,17.9 4,27 0.6,24.8" fill="#7a2a14" stroke="#54281c" stroke-width="1.1" stroke-linejoin="round"/><polygon points="3.6,8 7.6,5.6 10,7.2 19,2.2 22.4,3.2 22.4,17.2 4.8,25.4 3.6,24.6" fill="url(#fg)"/><polygon points="1.2,7 3.6,8 3.6,24.6 1.2,23.8" fill="#f48838"/><path d="M1.6,6.8 L6.6,4.2 L9.4,6.2 L18.6,1.2" fill="none" stroke="#c23a1a" stroke-width="1"/></svg>
<span class="t tw" style="left:940.50px;top:322.10px;font-size:19.00px;letter-spacing:0.772px;">Domains</span>
<svg style="position:absolute;left:905.10px;top:348.37px" width="24.00" height="27.00" viewBox="0 0 24 27"><defs><linearGradient id="fg" x1="0" y1="0" x2="1" y2="1"><stop offset="0" stop-color="#de5426"/><stop offset="0.5" stop-color="#c63c18"/><stop offset="1" stop-color="#982810"/></linearGradient></defs><polygon points="0.5,6.6 6.6,3.4 9.4,5.4 18.6,0.3 22,0.9 23.3,2.7 23.3,17.9 4,27 0.6,24.8" fill="#7a2a14" stroke="#54281c" stroke-width="1.1" stroke-linejoin="round"/><polygon points="3.6,8 7.6,5.6 10,7.2 19,2.2 22.4,3.2 22.4,17.2 4.8,25.4 3.6,24.6" fill="url(#fg)"/><polygon points="1.2,7 3.6,8 3.6,24.6 1.2,23.8" fill="#f48838"/><path d="M1.6,6.8 L6.6,4.2 L9.4,6.2 L18.6,1.2" fill="none" stroke="#c23a1a" stroke-width="1"/></svg>
<svg style="position:absolute;left:921.10px;top:362.27px" width="13.60" height="14.20" viewBox="0 0 13.6 14.2"><rect x="0.8" y="0.8" width="12" height="12.6" fill="#f4e070" stroke="#18181a" stroke-width="1.9"/><path d="M6.8,2.6 V8.6 M3.6,6.2 L6.8,10 L10,6.2" stroke="#8a4a10" stroke-width="2" fill="none"/></svg>
<span class="t tw" style="left:940.50px;top:351.99px;font-size:19.00px;letter-spacing:0.229px;">Used Data</span>
<svg style="position:absolute;left:905.10px;top:378.26px" width="24.00" height="27.00" viewBox="0 0 24 27"><defs><linearGradient id="fg" x1="0" y1="0" x2="1" y2="1"><stop offset="0" stop-color="#de5426"/><stop offset="0.5" stop-color="#c63c18"/><stop offset="1" stop-color="#982810"/></linearGradient></defs><polygon points="0.5,6.6 6.6,3.4 9.4,5.4 18.6,0.3 22,0.9 23.3,2.7 23.3,17.9 4,27 0.6,24.8" fill="#7a2a14" stroke="#54281c" stroke-width="1.1" stroke-linejoin="round"/><polygon points="3.6,8 7.6,5.6 10,7.2 19,2.2 22.4,3.2 22.4,17.2 4.8,25.4 3.6,24.6" fill="url(#fg)"/><polygon points="1.2,7 3.6,8 3.6,24.6 1.2,23.8" fill="#f48838"/><path d="M1.6,6.8 L6.6,4.2 L9.4,6.2 L18.6,1.2" fill="none" stroke="#c23a1a" stroke-width="1"/></svg>
<svg style="position:absolute;left:914.90px;top:384.56px" width="19.60" height="21.00" viewBox="0 0 19.6 21"><path d="M10,0 V6 M7,3 H13 M16,0.5 V5.5 M13.6,3 H18.4 M3,7 V12 M0.5,9.6 H6" stroke="#fff8c0" stroke-width="1.8" fill="none"/><path d="M3,15 V20 M0.5,17.6 H6" stroke="#d8f070" stroke-width="1.8" fill="none"/><rect x="6.8" y="7.2" width="12" height="12.6" fill="#e0b850" stroke="#18181a" stroke-width="1.9"/><path d="M8,8.4 L17.6,18.6" stroke="#7a5a10" stroke-width="1.3" fill="none"/></svg>
<span class="t tw" style="left:940.50px;top:381.88px;font-size:19.00px;letter-spacing:0.289px;">Mesh Constrains</span>
<svg style="position:absolute;left:905.10px;top:408.15px" width="24.00" height="27.00" viewBox="0 0 24 27"><defs><linearGradient id="fg" x1="0" y1="0" x2="1" y2="1"><stop offset="0" stop-color="#de5426"/><stop offset="0.5" stop-color="#c63c18"/><stop offset="1" stop-color="#982810"/></linearGradient></defs><polygon points="0.5,6.6 6.6,3.4 9.4,5.4 18.6,0.3 22,0.9 23.3,2.7 23.3,17.9 4,27 0.6,24.8" fill="#7a2a14" stroke="#54281c" stroke-width="1.1" stroke-linejoin="round"/><polygon points="3.6,8 7.6,5.6 10,7.2 19,2.2 22.4,3.2 22.4,17.2 4.8,25.4 3.6,24.6" fill="url(#fg)"/><polygon points="1.2,7 3.6,8 3.6,24.6 1.2,23.8" fill="#f48838"/><path d="M1.6,6.8 L6.6,4.2 L9.4,6.2 L18.6,1.2" fill="none" stroke="#c23a1a" stroke-width="1"/></svg>
<svg style="position:absolute;left:921.10px;top:422.05px" width="13.60" height="14.20" viewBox="0 0 13.6 14.2"><rect x="0.8" y="0.8" width="12" height="12.6" fill="#e8c050" stroke="#18181a" stroke-width="1.9"/><path d="M2,2 L11.6,12.2 M11.6,2 L2,12.2" stroke="#7a5a10" stroke-width="1.3" fill="none"/></svg>
<span class="t tw" style="left:940.50px;top:411.76px;font-size:19.00px;letter-spacing:-0.099px;">Mesh Model</span>
<svg style="position:absolute;left:905.10px;top:438.03px" width="24.00" height="27.00" viewBox="0 0 24 27"><defs><linearGradient id="fg" x1="0" y1="0" x2="1" y2="1"><stop offset="0" stop-color="#de5426"/><stop offset="0.5" stop-color="#c63c18"/><stop offset="1" stop-color="#982810"/></linearGradient></defs><polygon points="0.5,6.6 6.6,3.4 9.4,5.4 18.6,0.3 22,0.9 23.3,2.7 23.3,17.9 4,27 0.6,24.8" fill="#7a2a14" stroke="#54281c" stroke-width="1.1" stroke-linejoin="round"/><polygon points="3.6,8 7.6,5.6 10,7.2 19,2.2 22.4,3.2 22.4,17.2 4.8,25.4 3.6,24.6" fill="url(#fg)"/><polygon points="1.2,7 3.6,8 3.6,24.6 1.2,23.8" fill="#f48838"/><path d="M1.6,6.8 L6.6,4.2 L9.4,6.2 L18.6,1.2" fill="none" stroke="#c23a1a" stroke-width="1"/></svg>
<svg style="position:absolute;left:921.10px;top:451.93px" width="13.60" height="14.20" viewBox="0 0 13.6 14.2"><rect x="0.8" y="0.8" width="12" height="12.6" fill="#f4e890" stroke="#18181a" stroke-width="1.9"/><path d="M3.4,11 H5.6 V4 H8.4 M10.2,4.6 V6 M10.2,9 V10.6" stroke="#30301a" stroke-width="1.6" fill="none"/></svg>
<span class="t tw" style="left:940.50px;top:441.65px;font-size:19.00px;letter-spacing:-0.167px;">Solver Data</span>
<svg style="position:absolute;left:905.10px;top:467.92px" width="24.00" height="27.00" viewBox="0 0 24 27"><defs><linearGradient id="fg" x1="0" y1="0" x2="1" y2="1"><stop offset="0" stop-color="#de5426"/><stop offset="0.5" stop-color="#c63c18"/><stop offset="1" stop-color="#982810"/></linearGradient></defs><polygon points="0.5,6.6 6.6,3.4 9.4,5.4 18.6,0.3 22,0.9 23.3,2.7 23.3,17.9 4,27 0.6,24.8" fill="#7a2a14" stroke="#54281c" stroke-width="1.1" stroke-linejoin="round"/><polygon points="3.6,8 7.6,5.6 10,7.2 19,2.2 22.4,3.2 22.4,17.2 4.8,25.4 3.6,24.6" fill="url(#fg)"/><polygon points="1.2,7 3.6,8 3.6,24.6 1.2,23.8" fill="#f48838"/><path d="M1.6,6.8 L6.6,4.2 L9.4,6.2 L18.6,1.2" fill="none" stroke="#c23a1a" stroke-width="1"/></svg>
<svg style="position:absolute;left:921.10px;top:481.82px" width="13.60" height="14.20" viewBox="0 0 13.6 14.2"><rect x="0.8" y="0.8" width="12" height="12.6" fill="#4080d0" stroke="#18181a" stroke-width="1.9"/><polygon points="1.6,1.6 8,1.6 1.6,9" fill="#e04040"/><polygon points="8,1.6 12,1.6 12,4 3,12.6 1.6,12.6 1.6,9" fill="#e0a040"/><polygon points="12,4 12,8 7.6,12.6 3,12.6" fill="#60c080"/><polygon points="12,8 12,12.6 7.6,12.6" fill="#5070d0"/></svg>
<span class="t tw" style="left:940.50px;top:471.53px;font-size:19.00px;letter-spacing:0.457px;">Results</span>
<svg style="position:absolute;left:905.10px;top:497.80px" width="24.00" height="27.00" viewBox="0 0 24 27"><defs><linearGradient id="fg" x1="0" y1="0" x2="1" y2="1"><stop offset="0" stop-color="#de5426"/><stop offset="0.5" stop-color="#c63c18"/><stop offset="1" stop-color="#982810"/></linearGradient></defs><polygon points="0.5,6.6 6.6,3.4 9.4,5.4 18.6,0.3 22,0.9 23.3,2.7 23.3,17.9 4,27 0.6,24.8" fill="#7a2a14" stroke="#54281c" stroke-width="1.1" stroke-linejoin="round"/><polygon points="3.6,8 7.6,5.6 10,7.2 19,2.2 22.4,3.2 22.4,17.2 4.8,25.4 3.6,24.6" fill="url(#fg)"/><polygon points="1.2,7 3.6,8 3.6,24.6 1.2,23.8" fill="#f48838"/><path d="M1.6,6.8 L6.6,4.2 L9.4,6.2 L18.6,1.2" fill="none" stroke="#c23a1a" stroke-width="1"/></svg>
<svg style="position:absolute;left:921.10px;top:511.70px" width="13.60" height="14.20" viewBox="0 0 13.6 14.2"><rect x="0" y="0" width="13.6" height="14.2" fill="#0c0c10"/><circle cx="6" cy="6.4" r="2.8" fill="#f0b890"/><rect x="4" y="8.6" width="4.6" height="3.6" fill="#f8e8d8"/><rect x="10" y="3" width="2" height="2.2" fill="#f0e090"/><rect x="10" y="7" width="2" height="2.2" fill="#f0e090"/><rect x="10" y="11" width="2" height="2" fill="#e8e8e8"/></svg>
<span class="t tw" style="left:940.50px;top:501.42px;font-size:19.00px;letter-spacing:0.138px;">Pictures</span>
<svg style="position:absolute;left:879.60px;top:174.36px" width="14.00" height="20.00" viewBox="0 0 14 20"><path d="M7,7 V19.2" stroke="#0c0c34" stroke-width="2.9"/><circle cx="7" cy="7" r="4.8" fill="#f0ecf8" stroke="#12123e" stroke-width="2.7"/><circle cx="7.2" cy="7" r="1.6" fill="#12123e"/></svg>
<svg style="position:absolute;left:910.50px;top:234.03px" width="14.00" height="20.00" viewBox="0 0 14 20"><path d="M7,7 V19.2" stroke="#0c0c34" stroke-width="2.9"/><circle cx="7" cy="7" r="4.8" fill="#f0ecf8" stroke="#12123e" stroke-width="2.7"/><circle cx="7.2" cy="7" r="1.6" fill="#12123e"/></svg>
<svg style="position:absolute;left:1384px;top:1px" width="53" height="52"><g transform="translate(3.40 2.50)"><rect x="0.75" y="0.75" width="45.00" height="44.90" fill="#cbc9cb" stroke="#85838a" stroke-width="1.50"/><path d="M2.25,44.90 V2.25 H45.00" fill="none" stroke="#f6f6f8" stroke-width="1.50"/><path d="M1.50,47.15 H47.25 V1.50" fill="none" stroke="#f6f6f8" stroke-width="1.50"/></g></svg>
<svg style="position:absolute;left:1387.15px;top:4.50px" width="46.00" height="46.00" viewBox="0 0 46 46"><rect x="11.6" y="20.4" width="20.4" height="15.6" fill="#f6f0b4" stroke="#3456b8" stroke-width="1.7"/><polygon points="26.9,10 33.3,17.4 33.3,25.8 26.9,32.4 21,25.8 21,17.4" fill="#fff" stroke="#141414" stroke-width="1.5" stroke-linejoin="round"/><polygon points="26.9,22 33.3,17.4 33.3,25.8 26.9,32.4" fill="#9c2414"/><polygon points="21,17.4 26.9,22 26.9,32.4 21,25.8" fill="#e26434"/><polygon points="21,17.4 26.9,10.6 33.3,17.4 26.9,22" fill="#fdfdfd"/><polygon points="26.9,10 33.3,17.4 33.3,25.8 26.9,32.4 21,25.8 21,17.4" fill="none" stroke="#141414" stroke-width="1.5" stroke-linejoin="round"/></svg>
<svg style="position:absolute;left:1434px;top:1px" width="60" height="52"><g transform="translate(2.60 2.50)"><rect x="0.75" y="0.75" width="52.50" height="44.90" fill="#cbc9cb" stroke="#85838a" stroke-width="1.50"/><path d="M2.25,44.90 V2.25 H52.50" fill="none" stroke="#f6f6f8" stroke-width="1.50"/><path d="M1.50,47.15 H54.75 V1.50" fill="none" stroke="#f6f6f8" stroke-width="1.50"/></g></svg>
<svg style="position:absolute;left:1437.10px;top:4.50px" width="46.00" height="46.00" viewBox="0 0 46 46"><path d="M24.8,24.4 L30.6,30.8" stroke="#3a3010" stroke-width="3.6" stroke-linecap="round"/><path d="M25.6,25.2 L30.4,30.6" stroke="#c8a040" stroke-width="1.8"/><circle cx="21.6" cy="21" r="4.7" fill="#eef4fc" stroke="#2c3448" stroke-width="1.7"/><path d="M27,14.1 H36 M31.5,9.6 V18.6" stroke="#c01c24" stroke-width="2.8"/><path d="M10.4,32 H18.8" stroke="#c01c24" stroke-width="2.8"/><polygon points="36.9,31.3 44.8,31.3 40.8,37.8" fill="#0a0a0a"/></svg>
<svg style="position:absolute;left:1491px;top:1px" width="60" height="52"><g transform="translate(2.60 2.50)"><rect x="0.75" y="0.75" width="52.70" height="44.90" fill="#cbc9cb" stroke="#85838a" stroke-width="1.50"/><path d="M2.25,44.90 V2.25 H52.70" fill="none" stroke="#f6f6f8" stroke-width="1.50"/><path d="M1.50,47.15 H54.95 V1.50" fill="none" stroke="#f6f6f8" stroke-width="1.50"/></g></svg>
<svg style="position:absolute;left:1494.20px;top:4.50px" width="46.00" height="46.00" viewBox="0 0 46 46"><polygon points="22.9,11 35.8,23.9 22.9,36.8 10,23.9" fill="#f4e4e4" opacity="0.8"/><path d="M22.9,15 V33 M14,23.9 H32" stroke="#a82c34" stroke-width="2.4"/><polygon points="22.9,12.4 27.4,18.2 18.4,18.2" fill="#a82c34"/><polygon points="22.9,35.4 27.4,29.6 18.4,29.6" fill="#a82c34"/><polygon points="11.4,23.9 17.2,19.4 17.2,28.4" fill="#a82c34"/><polygon points="34.4,23.9 28.6,19.4 28.6,28.4" fill="#a82c34"/><path d="M19.6,20.6 H26.2 M19.6,27.2 H26.2 M19.6,20.6 V27.2 M26.2,20.6 V27.2" stroke="#f8ecec" stroke-width="1" fill="none"/><polygon points="36.8,30.9 45.6,30.9 41.2,37.8" fill="#0a0a0a"/></svg>
<svg style="position:absolute;left:1547px;top:1px" width="60" height="52"><g transform="translate(3.00 2.50)"><rect x="0.75" y="0.75" width="52.30" height="44.90" fill="#cbc9cb" stroke="#85838a" stroke-width="1.50"/><path d="M2.25,44.90 V2.25 H52.30" fill="none" stroke="#f6f6f8" stroke-width="1.50"/><path d="M1.50,47.15 H54.55 V1.50" fill="none" stroke="#f6f6f8" stroke-width="1.50"/></g></svg>
<svg style="position:absolute;left:1550.40px;top:4.50px" width="46.00" height="46.00" viewBox="0 0 46 46"><path d="M11.8,13.1 H34.5 M31.5,13.1 V34 M11.8,33.6 L22,24.6" stroke="#f6d8d8" stroke-width="3.4" fill="none"/><circle cx="23.4" cy="22.6" r="7.2" fill="#f6f2f2" stroke="#2a2424" stroke-width="1.6"/><path d="M11.8,13.1 H34.5 M31.5,13.1 V34 M11.8,33.6 L20,26.4 M34,13.4 L27,19" stroke="#a83030" stroke-width="1.5" fill="none"/><path d="M24.6,15.8 Q31,21.6 29.4,29.4" stroke="#2a2424" stroke-width="1.5" fill="none"/><polygon points="38.0,30.9 45.9,30.9 42.0,37.8" fill="#0a0a0a"/></svg>
<svg style="position:absolute;left:1604px;top:1px" width="60" height="52"><g transform="translate(3.00 2.50)"><rect x="0.75" y="0.75" width="52.10" height="44.90" fill="#cbc9cb" stroke="#85838a" stroke-width="1.50"/><path d="M2.25,44.90 V2.25 H52.10" fill="none" stroke="#f6f6f8" stroke-width="1.50"/><path d="M1.50,47.15 H54.35 V1.50" fill="none" stroke="#f6f6f8" stroke-width="1.50"/></g></svg>
<svg style="position:absolute;left:1607.30px;top:4.50px" width="46.00" height="46.00" viewBox="0 0 46 46"><path d="M10.4,12.4 V23.2" stroke="#d42024" stroke-width="2.6"/><polygon points="11.6,18 18.6,9.8 18.6,26.2" fill="#e0241c"/><path d="M23.3,19 V28.9 L33,33.2 M23.3,28.9 L33,25.2" stroke="#74787c" stroke-width="1.7" fill="none"/><polygon points="23.3,16.6 20.6,21 26,21" fill="#74787c"/><polygon points="35.4,34.2 30.6,35 32,30.6" fill="#74787c"/><polygon points="35.4,24.4 31.6,27.8 30.4,23.4" fill="#74787c"/><polygon points="38.0,30.9 45.5,30.9 41.8,37.8" fill="#0a0a0a"/></svg>
<svg style="position:absolute;left:1661px;top:1px" width="52" height="52"><g transform="translate(3.00 2.50)"><rect x="0.75" y="0.75" width="44.70" height="44.90" fill="#cbc9cb" stroke="#85838a" stroke-width="1.50"/><path d="M2.25,44.90 V2.25 H44.70" fill="none" stroke="#f6f6f8" stroke-width="1.50"/><path d="M1.50,47.15 H46.95 V1.50" fill="none" stroke="#f6f6f8" stroke-width="1.50"/></g></svg>
<svg style="position:absolute;left:1663.60px;top:4.50px" width="46.00" height="46.00" viewBox="0 0 46 46"><path d="M13.4,19.4 L17.6,16 H27.2 V13.1 H33.7 V17.2 L36.1,19.6 V31.4 L33,34.8 H13.6 L10.6,31.6 V21.6 Z" fill="#dcd2d2" stroke="#1c1410" stroke-width="2.4" stroke-linejoin="round"/><rect x="28.2" y="14" width="4.6" height="3.4" fill="#fbfbfb"/><circle cx="25.3" cy="26.4" r="3.5" fill="#fbfbff" stroke="#16204c" stroke-width="2.4"/><rect x="15.2" y="22.8" width="3.8" height="2.2" fill="#181818"/></svg>
<svg style="position:absolute;left:0;top:0" width="1720" height="620" viewBox="0 0 1720 620"><defs><linearGradient id="bc" x1="0" y1="0" x2="1" y2="0"><stop offset="0" stop-color="#86591f"/><stop offset="0.05" stop-color="#98681f"/><stop offset="0.26" stop-color="#b6821c"/><stop offset="0.52" stop-color="#c9931b"/><stop offset="0.78" stop-color="#b7811c"/><stop offset="0.9" stop-color="#9a6b1f"/><stop offset="1" stop-color="#724820"/></linearGradient><linearGradient id="tc" x1="0" y1="0" x2="1" y2="0.4"><stop offset="0" stop-color="#ab7c1f"/><stop offset="0.5" stop-color="#a3751f"/><stop offset="1" stop-color="#9b6e21"/></linearGradient></defs><path d="M1396.2,137.0 V508.0 A90.3,52.9 0 0 0 1576.8,508.0 V137.0 Z" fill="url(#bc)" stroke="#6a4418" stroke-width="0.8"/><path d="M1396.2,508.0 A90.3,52.9 0 0 0 1576.8,508.0" fill="none" stroke="#2a1808" stroke-width="1.4"/><path d="M1396.0,503.5 V511.0 M1577.0,503.5 V511.0" stroke="#2a1808" stroke-width="2.2"/><path d="M1551.3,174.0 V544.0" stroke="#1a1008" stroke-width="1.3"/><ellipse cx="1486.5" cy="137.0" rx="91.4" ry="52.9" fill="url(#tc)" stroke="#20140a" stroke-width="1.4"/></svg>
<div class="" style="position:absolute;left:0.00px;top:651.60px;width:864.00px;height:457.40px;background:#cbc8c5;box-shadow:inset 0 -2.2px 0 #858585"></div>
<svg style="position:absolute;left:0px;top:651px" width="864" height="3"><g transform="translate(0.00 0.60)"><rect width="864.00" height="2.20" fill="#e4e0d6"/></g></svg>
<svg style="position:absolute;left:0px;top:653px" width="864" height="3"><g transform="translate(0.00 0.80)"><rect width="864.00" height="2.00" fill="#f6f4f0"/></g></svg>
<div class="" style="position:absolute;left:0.00px;top:653.60px;width:5.20px;height:453.20px;background:linear-gradient(90deg,#e9e2d6 0,#e9e2d6 40%,#fdfdfd 42%,#fdfdfd 90%,#d8d6d4 100%)"></div>
<svg style="position:absolute;left:862px;top:653px" width="2" height="456"><g transform="translate(0.00 0.60)"><rect width="2.00" height="455.40" fill="#77756e"/></g></svg>
<div class="" style="position:absolute;left:4.00px;top:658.70px;width:853.50px;height:37.60px;background:linear-gradient(90deg,#1a2874 0,#24367f 18%,#4a66aa 45%,#7d9bcf 72%,#a9c8f0 100%)"></div>
<svg style="position:absolute;left:6px;top:660px" width="34" height="34"><g transform="translate(0.80 0.20)"><rect width="33.00" height="33.60" fill="#fff"/></g></svg>
<svg style="position:absolute;left:6.80px;top:660.20px" width="33.00" height="33.60" viewBox="0 0 33 34"><ellipse cx="17" cy="22" rx="13" ry="6.4" fill="#5aa8c0"/><ellipse cx="16.4" cy="20" rx="12" ry="5.6" fill="#fff"/><ellipse cx="17" cy="23.6" rx="9" ry="2.6" fill="#b8dce6"/><ellipse cx="22" cy="12" rx="5" ry="4.4" fill="#c8e4ec"/><g fill="#101010"><rect x="2.6" y="15.6" width="4.6" height="3.4" /><rect x="5" y="18.4" width="3.6" height="2.6"/><rect x="11.6" y="21" width="6.4" height="2.8"/><rect x="20" y="18.6" width="3.6" height="3"/><rect x="23" y="16" width="5" height="2.6"/><rect x="7.4" y="7.6" width="2.4" height="4"/><rect x="9.4" y="11" width="2.6" height="2.2"/><rect x="12.6" y="4.6" width="3" height="2.4"/><rect x="19" y="5" width="4.6" height="2.2"/><rect x="23" y="7" width="3.6" height="2"/></g></svg>
<span class="t " style="left:44.50px;top:666.61px;font-size:22.20px;letter-spacing:0.245px;color:#fff;text-shadow:0 0 0.8px rgba(255,255,255,.85);font-family:'DejaVu Sans','Liberation Sans',sans-serif;">Properties</span>
<svg style="position:absolute;left:820px;top:662px" width="36" height="32"><g transform="translate(0.80 0.00)"><rect width="34.40" height="31.20" fill="#34383f"/><rect width="31.80" height="28.60" fill="#fbfbf8"/><rect x="1.8" y="1.8" width="30.00" height="26.80" fill="#d5cec4"/></g></svg>
<svg style="position:absolute;left:829.50px;top:669.30px" width="15.80" height="15.80" viewBox="0 0 15.8 15.8"><path d="M1.2,1.2 L14.6,14.6 M14.6,1.2 L1.2,14.6" stroke="#050505" stroke-width="3.3" /></svg>
<svg style="position:absolute;left:6.80px;top:704.80px" width="113.40" height="35.20" viewBox="0 0 113.4 35.2"><polygon points="0.9,35.2 0.9,11.6 9.8,0.9 112.5,0.9 112.5,35.2" fill="#9b9b9b" stroke="#787878" stroke-width="1.8"/></svg>
<svg style="position:absolute;left:121.60px;top:705.40px" width="109.80" height="35.60" viewBox="0 0 109.8 35.6"><polygon points="0.5,35.6 0.5,8 7,0.8 109.2,0.8 109.2,35.6" fill="#cbc8c5" stroke="#868688" stroke-width="1.4"/><path d="M0.2,35.6 V9.4 L7.4,2.5 H108.4" fill="none" stroke="#fff" stroke-width="1.5"/><rect x="1.5" y="4.6" width="107.4" height="27.5" fill="#cfcdd1" stroke="#6866a8" stroke-width="1.8"/></svg>
<span class="t k" style="left:26.20px;top:710.90px;font-size:20.20px;letter-spacing:0.195px;font-weight:bold;">General</span>
<span class="t k" style="left:136.00px;top:710.90px;font-size:20.20px;letter-spacing:0.092px;font-weight:bold;">Modeler</span>
<svg style="position:absolute;left:3px;top:739px" width="856" height="3"><g transform="translate(0.60 0.50)"><rect width="855.30" height="2.00" fill="#fbfbfb"/></g></svg>
<svg style="position:absolute;left:3px;top:739px" width="3" height="309"><g transform="translate(0.60 0.50)"><rect width="1.80" height="307.70" fill="#fbfbfb"/></g></svg>
<svg style="position:absolute;left:856px;top:739px" width="3" height="309"><g transform="translate(0.90 0.50)"><rect width="2.00" height="307.70" fill="#747472"/></g></svg>
<svg style="position:absolute;left:123px;top:739px" width="108" height="3"><g transform="translate(0.00 0.10)"><rect width="107.40" height="2.40" fill="#cbc8c5"/></g></svg>
<svg style="position:absolute;left:5px;top:1043px" width="850" height="4"><g transform="translate(0.60 0.60)"><rect width="849.30" height="2.40" fill="#c5c4d2"/></g></svg>
<svg style="position:absolute;left:3px;top:1046px" width="856" height="4"><g transform="translate(0.60 0.00)"><rect width="854.90" height="3.20" fill="#55556c"/></g></svg>
<svg style="position:absolute;left:3px;top:1049px" width="856" height="3"><g transform="translate(0.60 0.20)"><rect width="855.30" height="2.00" fill="#f6f6f8"/></g></svg>
<svg style="position:absolute;left:215px;top:746px" width="639" height="38"><g transform="translate(0.60 0.80)"><rect x="0.85" y="0.85" width="636.30" height="34.90" fill="none" stroke="#8f8f8d" stroke-width="1.70"/></g></svg>
<svg style="position:absolute;left:215px;top:783px" width="639" height="37"><g transform="translate(0.60 0.40)"><rect x="0.85" y="0.85" width="636.30" height="34.90" fill="none" stroke="#8f8f8d" stroke-width="1.70"/></g></svg>
<svg style="position:absolute;left:215px;top:820px" width="639" height="37"><g transform="translate(0.60 0.00)"><rect x="0.85" y="0.85" width="636.30" height="34.90" fill="none" stroke="#8f8f8d" stroke-width="1.70"/></g></svg>
<svg style="position:absolute;left:215px;top:856px" width="639" height="38"><g transform="translate(0.60 0.60)"><rect x="0.85" y="0.85" width="636.30" height="34.90" fill="none" stroke="#8f8f8d" stroke-width="1.70"/></g></svg>
<svg style="position:absolute;left:215px;top:893px" width="639" height="37"><g transform="translate(0.60 0.20)"><rect x="0.85" y="0.85" width="636.30" height="34.90" fill="none" stroke="#8f8f8d" stroke-width="1.70"/></g></svg>
<svg style="position:absolute;left:215px;top:929px" width="639" height="38"><g transform="translate(0.60 0.80)"><rect x="0.85" y="0.85" width="636.30" height="34.90" fill="none" stroke="#8f8f8d" stroke-width="1.70"/></g></svg>
<svg style="position:absolute;left:215px;top:966px" width="639" height="37"><g transform="translate(0.60 0.40)"><rect x="0.85" y="0.85" width="636.30" height="34.90" fill="none" stroke="#8f8f8d" stroke-width="1.70"/></g></svg>
<svg style="position:absolute;left:215px;top:1003px" width="639" height="37"><g transform="translate(0.60 0.00)"><rect x="0.85" y="0.85" width="636.30" height="34.90" fill="none" stroke="#8f8f8d" stroke-width="1.70"/></g></svg>
<span class="t k" style="left:69.60px;top:754.30px;font-size:20.20px;letter-spacing:0.373px;font-weight:bold;">Type of shape</span>
<span class="t " style="left:217.70px;top:754.30px;font-size:20.20px;letter-spacing:0.221px;color:#1c1c1c;">Solid</span>
<span class="t k" style="left:47.60px;top:790.90px;font-size:20.20px;letter-spacing:0.280px;font-weight:bold;">Number of faces</span>
<span class="t " style="left:217.70px;top:790.90px;font-size:20.20px;color:#1c1c1c;">3</span>
<span class="t k" style="left:76.20px;top:827.50px;font-size:20.20px;letter-spacing:0.321px;font-weight:bold;">Type of prism</span>
<span class="t " style="left:217.70px;top:827.50px;font-size:20.20px;letter-spacing:-0.043px;color:#1c1c1c;">Prism of Extrusion or Volume of Revolution</span>
<span class="t k" style="left:135.00px;top:864.10px;font-size:20.20px;letter-spacing:0.348px;font-weight:bold;">Volume</span>
<span class="t " style="left:217.70px;top:864.10px;font-size:20.20px;letter-spacing:0.310px;color:#1c1c1c;">125.6637e3 mm**3</span>
<span class="t k" style="left:29.70px;top:900.70px;font-size:20.20px;letter-spacing:0.041px;font-weight:bold;">Bounding box size</span>
<span class="t " style="left:217.70px;top:900.70px;font-size:20.20px;letter-spacing:0.029px;color:#1c1c1c;">DX=43.29568821 mm,  DY=43.29568821 mm,  DZ=100.0000002 mm</span>
<span class="t k" style="left:6.70px;top:937.30px;font-size:20.20px;letter-spacing:0.067px;font-weight:bold;">Bounding box center</span>
<span class="t " style="left:217.70px;top:937.30px;font-size:20.20px;letter-spacing:0.133px;color:#1c1c1c;">0 mm,  0 mm,  50 mm</span>
<span class="t k" style="left:23.30px;top:973.90px;font-size:20.20px;letter-spacing:0.281px;font-weight:bold;">Used by an other ?</span>
<span class="t " style="left:217.70px;top:973.90px;font-size:20.20px;letter-spacing:0.042px;color:#1c1c1c;">Not used.</span>
<span class="t k" style="left:11.80px;top:1010.50px;font-size:20.20px;letter-spacing:0.343px;font-weight:bold;">Maximum Tolerance</span>
<span class="t " style="left:217.70px;top:1010.50px;font-size:20.20px;letter-spacing:0.329px;color:#1c1c1c;">100e-9 mm</span>
<svg style="position:absolute;left:610px;top:1055px" width="127" height="50"><g transform="translate(2.90 3.30)"><rect x="0.85" y="0.85" width="119.40" height="42.00" fill="#cbc8c5" stroke="#767676" stroke-width="1.70"/><path d="M2.55,42.00 V2.55 H119.40" fill="none" stroke="#fcfcfc" stroke-width="1.70"/><path d="M1.70,44.55 H121.95 V1.70" fill="none" stroke="#fcfcfc" stroke-width="1.70"/></g></svg>
<span class="t k" style="left:660.20px;top:1069.70px;font-size:20.20px;letter-spacing:-0.900px;font-weight:bold;">OK</span>
<svg style="position:absolute;left:733px;top:1055px" width="127" height="50"><g transform="translate(3.20 3.30)"><rect x="0.85" y="0.85" width="118.90" height="42.00" fill="#cbc8c5" stroke="#767676" stroke-width="1.70"/><path d="M2.55,42.00 V2.55 H118.90" fill="none" stroke="#fcfcfc" stroke-width="1.70"/><path d="M1.70,44.55 H121.45 V1.70" fill="none" stroke="#fcfcfc" stroke-width="1.70"/></g></svg>
<span class="t k" style="left:765.20px;top:1069.70px;font-size:20.20px;letter-spacing:0.032px;font-weight:bold;">Cancel</span>
<div class="" style="position:absolute;left:905.60px;top:645.40px;width:814.40px;height:463.60px;background:#cbc8c5;box-shadow:inset 0 -2.8px 0 #3c3c3c"></div>
<svg style="position:absolute;left:905px;top:645px" width="815" height="3"><g transform="translate(0.60 0.40)"><rect width="814.40" height="2.20" fill="#e4e0d6"/></g></svg>
<svg style="position:absolute;left:905px;top:647px" width="815" height="3"><g transform="translate(0.60 0.60)"><rect width="814.40" height="2.00" fill="#f6f4f0"/></g></svg>
<div class="" style="position:absolute;left:905.60px;top:647.40px;width:5.00px;height:458.80px;background:linear-gradient(90deg,#fafaf8 0,#e8e6e2 50%,#d2d0cd 100%)"></div>
<svg style="position:absolute;left:1717px;top:647px" width="3" height="462"><g transform="translate(0.80 0.40)"><rect width="2.20" height="461.60" fill="#77777a"/></g></svg>
<div class="" style="position:absolute;left:910.60px;top:652.20px;width:804.80px;height:34.40px;background:linear-gradient(90deg,#1a2874 0,#24367f 18%,#4a66aa 45%,#7d9bcf 72%,#a9c8f0 100%)"></div>
<svg style="position:absolute;left:913px;top:653px" width="32" height="31"><g transform="translate(0.10 0.20)"><rect width="31.00" height="30.80" fill="#fff"/></g></svg>
<svg style="position:absolute;left:913.10px;top:653.20px" width="31.00" height="30.80" viewBox="0 0 33 34"><ellipse cx="17" cy="22" rx="13" ry="6.4" fill="#5aa8c0"/><ellipse cx="16.4" cy="20" rx="12" ry="5.6" fill="#fff"/><ellipse cx="17" cy="23.6" rx="9" ry="2.6" fill="#b8dce6"/><ellipse cx="22" cy="12" rx="5" ry="4.4" fill="#c8e4ec"/><g fill="#101010"><rect x="2.6" y="15.6" width="4.6" height="3.4" /><rect x="5" y="18.4" width="3.6" height="2.6"/><rect x="11.6" y="21" width="6.4" height="2.8"/><rect x="20" y="18.6" width="3.6" height="3"/><rect x="23" y="16" width="5" height="2.6"/><rect x="7.4" y="7.6" width="2.4" height="4"/><rect x="9.4" y="11" width="2.6" height="2.2"/><rect x="12.6" y="4.6" width="3" height="2.4"/><rect x="19" y="5" width="4.6" height="2.2"/><rect x="23" y="7" width="3.6" height="2"/></g></svg>
<span class="t " style="left:948.50px;top:659.29px;font-size:20.30px;letter-spacing:0.557px;color:#fff;text-shadow:0 0 0.8px rgba(255,255,255,.85);font-family:'DejaVu Sans','Liberation Sans',sans-serif;">Properties</span>
<svg style="position:absolute;left:1679px;top:654px" width="33" height="30"><g transform="translate(0.50 0.40)"><rect width="32.50" height="28.90" fill="#34383f"/><rect width="29.90" height="26.30" fill="#fbfbf8"/><rect x="1.8" y="1.8" width="28.10" height="24.50" fill="#d5cec4"/></g></svg>
<svg style="position:absolute;left:1687.75px;top:661.05px" width="14.80" height="14.80" viewBox="0 0 14.8 14.8"><path d="M1.2,1.2 L13.6,13.6 M13.6,1.2 L1.2,13.6" stroke="#050505" stroke-width="3.1" /></svg>
<svg style="position:absolute;left:914.40px;top:695.20px" width="105.40" height="32.80" viewBox="0 0 105.4 32.8"><polygon points="0.9,32.8 0.9,11.6 9.8,0.9 104.5,0.9 104.5,32.8" fill="#9b9b9b" stroke="#787878" stroke-width="1.8"/></svg>
<svg style="position:absolute;left:1021.20px;top:695.80px" width="103.60" height="33.20" viewBox="0 0 103.6 33.2"><polygon points="0.5,33.2 0.5,8 7,0.8 103.0,0.8 103.0,33.2" fill="#cbc8c5" stroke="#868688" stroke-width="1.4"/><path d="M0.2,33.2 V9.4 L7.4,2.5 H102.2" fill="none" stroke="#fff" stroke-width="1.5"/><rect x="1.5" y="4.6" width="101.2" height="25.1" fill="#cfcdd1" stroke="#6866a8" stroke-width="1.8"/></svg>
<span class="t k" style="left:931.30px;top:701.00px;font-size:18.90px;letter-spacing:0.352px;font-weight:bold;">General</span>
<span class="t k" style="left:1035.00px;top:701.00px;font-size:18.90px;letter-spacing:0.156px;font-weight:bold;">Modeler</span>
<svg style="position:absolute;left:910px;top:727px" width="806" height="3"><g transform="translate(0.60 0.80)"><rect width="804.90" height="2.00" fill="#fbfbfb"/></g></svg>
<svg style="position:absolute;left:910px;top:727px" width="3" height="323"><g transform="translate(0.60 0.80)"><rect width="1.80" height="321.90" fill="#fbfbfb"/></g></svg>
<svg style="position:absolute;left:1713px;top:727px" width="3" height="323"><g transform="translate(0.50 0.80)"><rect width="2.00" height="321.90" fill="#747472"/></g></svg>
<svg style="position:absolute;left:1022px;top:727px" width="102" height="3"><g transform="translate(0.60 0.40)"><rect width="101.20" height="2.40" fill="#cbc8c5"/></g></svg>
<svg style="position:absolute;left:912px;top:1046px" width="800" height="3"><g transform="translate(0.60 0.10)"><rect width="798.90" height="2.40" fill="#c5c4d2"/></g></svg>
<svg style="position:absolute;left:910px;top:1048px" width="806" height="4"><g transform="translate(0.60 0.50)"><rect width="804.50" height="3.20" fill="#55556c"/></g></svg>
<svg style="position:absolute;left:910px;top:1051px" width="806" height="3"><g transform="translate(0.60 0.70)"><rect width="804.90" height="2.00" fill="#f6f6f8"/></g></svg>
<svg style="position:absolute;left:1109px;top:733px" width="602" height="35"><g transform="translate(0.40 0.80)"><rect x="0.80" y="0.80" width="600.00" height="32.60" fill="none" stroke="#8f8f8d" stroke-width="1.60"/></g></svg>
<svg style="position:absolute;left:1109px;top:768px" width="602" height="35"><g transform="translate(0.40 0.00)"><rect x="0.80" y="0.80" width="600.00" height="32.60" fill="none" stroke="#8f8f8d" stroke-width="1.60"/></g></svg>
<svg style="position:absolute;left:1109px;top:802px" width="602" height="35"><g transform="translate(0.40 0.20)"><rect x="0.80" y="0.80" width="600.00" height="32.60" fill="none" stroke="#8f8f8d" stroke-width="1.60"/></g></svg>
<svg style="position:absolute;left:1109px;top:836px" width="602" height="35"><g transform="translate(0.40 0.40)"><rect x="0.80" y="0.80" width="600.00" height="32.60" fill="none" stroke="#8f8f8d" stroke-width="1.60"/></g></svg>
<svg style="position:absolute;left:1109px;top:870px" width="602" height="35"><g transform="translate(0.40 0.60)"><rect x="0.80" y="0.80" width="600.00" height="32.60" fill="none" stroke="#8f8f8d" stroke-width="1.60"/></g></svg>
<svg style="position:absolute;left:1109px;top:904px" width="602" height="35"><g transform="translate(0.40 0.80)"><rect x="0.80" y="0.80" width="600.00" height="32.60" fill="none" stroke="#8f8f8d" stroke-width="1.60"/></g></svg>
<svg style="position:absolute;left:1109px;top:939px" width="602" height="35"><g transform="translate(0.40 0.00)"><rect x="0.80" y="0.80" width="600.00" height="32.60" fill="none" stroke="#8f8f8d" stroke-width="1.60"/></g></svg>
<svg style="position:absolute;left:1109px;top:973px" width="602" height="35"><g transform="translate(0.40 0.20)"><rect x="0.80" y="0.80" width="600.00" height="32.60" fill="none" stroke="#8f8f8d" stroke-width="1.60"/></g></svg>
<svg style="position:absolute;left:1109px;top:1007px" width="602" height="35"><g transform="translate(0.40 0.40)"><rect x="0.80" y="0.80" width="600.00" height="32.60" fill="none" stroke="#8f8f8d" stroke-width="1.60"/></g></svg>
<span class="t k" style="left:973.30px;top:742.30px;font-size:18.90px;letter-spacing:0.344px;font-weight:bold;">Type of shape</span>
<span class="t " style="left:1112.30px;top:742.30px;font-size:18.90px;letter-spacing:0.143px;color:#1c1c1c;">Shell</span>
<span class="t k" style="left:922.70px;top:776.50px;font-size:18.90px;letter-spacing:0.258px;font-weight:bold;">Closed or opened ?</span>
<span class="t " style="left:1112.30px;top:776.50px;font-size:18.90px;letter-spacing:0.273px;color:#1c1c1c;">closed</span>
<span class="t k" style="left:952.20px;top:810.70px;font-size:18.90px;letter-spacing:0.265px;font-weight:bold;">Number of faces</span>
<span class="t " style="left:1112.30px;top:810.70px;font-size:18.90px;color:#1c1c1c;">3</span>
<span class="t k" style="left:1059.00px;top:844.90px;font-size:18.90px;letter-spacing:0.991px;font-weight:bold;">Area</span>
<span class="t " style="left:1112.30px;top:844.90px;font-size:18.90px;letter-spacing:0.279px;color:#1c1c1c;">15.07964e3 mm**2</span>
<span class="t k" style="left:1033.80px;top:879.10px;font-size:18.90px;letter-spacing:0.468px;font-weight:bold;">Volume</span>
<span class="t " style="left:1112.30px;top:879.10px;font-size:18.90px;letter-spacing:0.279px;color:#1c1c1c;">125.6637e3 mm**3</span>
<span class="t k" style="left:935.10px;top:913.30px;font-size:18.90px;letter-spacing:0.056px;font-weight:bold;">Bounding box size</span>
<span class="t " style="left:1112.30px;top:913.30px;font-size:18.90px;letter-spacing:0.078px;color:#1c1c1c;">DX=43.29568821 mm,  DY=43.29568821 mm,  DZ=100.0000002 mm</span>
<span class="t k" style="left:913.70px;top:947.50px;font-size:18.90px;letter-spacing:0.072px;font-weight:bold;">Bounding box center</span>
<span class="t " style="left:1112.30px;top:947.50px;font-size:18.90px;letter-spacing:0.124px;color:#1c1c1c;">0 mm,  0 mm,  50 mm</span>
<span class="t k" style="left:928.80px;top:981.70px;font-size:18.90px;letter-spacing:0.298px;font-weight:bold;">Used by an other ?</span>
<span class="t " style="left:1112.30px;top:981.70px;font-size:18.90px;letter-spacing:0.038px;color:#1c1c1c;">Not used.</span>
<span class="t k" style="left:918.00px;top:1015.90px;font-size:18.90px;letter-spacing:0.356px;font-weight:bold;">Maximum Tolerance</span>
<span class="t " style="left:1112.30px;top:1015.90px;font-size:18.90px;letter-spacing:0.326px;color:#1c1c1c;">100e-9 mm</span>
<svg style="position:absolute;left:1481px;top:1058px" width="120" height="47"><g transform="translate(3.40 2.70)"><rect x="0.85" y="0.85" width="111.30" height="39.00" fill="#cbc8c5" stroke="#767676" stroke-width="1.70"/><path d="M2.55,39.00 V2.55 H111.30" fill="none" stroke="#fcfcfc" stroke-width="1.70"/><path d="M1.70,41.55 H113.85 V1.70" fill="none" stroke="#fcfcfc" stroke-width="1.70"/></g></svg>
<span class="t k" style="left:1528.30px;top:1071.40px;font-size:18.90px;letter-spacing:-0.750px;font-weight:bold;">OK</span>
<svg style="position:absolute;left:1597px;top:1058px" width="120" height="47"><g transform="translate(3.40 2.70)"><rect x="0.85" y="0.85" width="111.30" height="39.00" fill="#cbc8c5" stroke="#767676" stroke-width="1.70"/><path d="M2.55,39.00 V2.55 H111.30" fill="none" stroke="#fcfcfc" stroke-width="1.70"/><path d="M1.70,41.55 H113.85 V1.70" fill="none" stroke="#fcfcfc" stroke-width="1.70"/></g></svg>
<span class="t k" style="left:1627.20px;top:1071.40px;font-size:18.90px;letter-spacing:-0.036px;font-weight:bold;">Cancel</span>
</div></body></html>
